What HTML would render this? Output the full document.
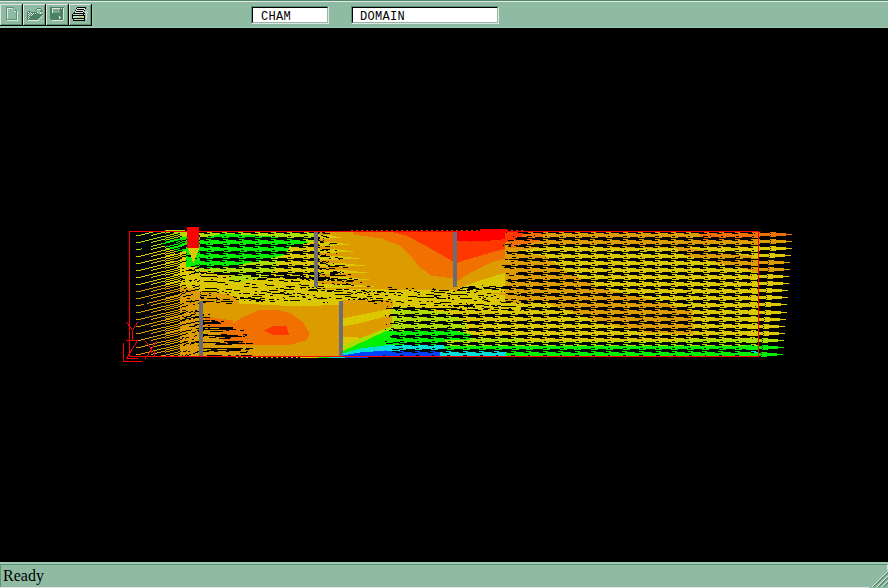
<!DOCTYPE html>
<html><head><meta charset="utf-8">
<style>
html,body{margin:0;padding:0;}
body{width:888px;height:588px;overflow:hidden;background:#000;position:relative;font-family:"Liberation Sans",sans-serif;}
.a{position:absolute;}
#tb{left:0;top:0;width:888px;height:28px;background:#8fbba3;}
.box{position:absolute;top:6px;height:18px;box-sizing:border-box;border-top:1px solid #5d9476;border-left:1px solid #5d9476;border-right:1px solid #e4e4e4;border-bottom:1px solid #e4e4e4;}
.box i{position:absolute;left:0;top:0;right:0;bottom:0;border-top:1px solid #000;border-left:1px solid #000;border-right:1px solid #8fbba3;border-bottom:1px solid #8fbba3;background:#fff;}
.box span{position:absolute;top:3px;font-family:"Liberation Mono",monospace;font-size:12px;line-height:14px;color:#000;letter-spacing:0.3px;}
#sb{left:0;top:562px;width:888px;height:26px;background:#8fbba3;}
svg{position:absolute;left:0;top:0;}
</style></head><body>
<div id="tb" class="a">
  <div class="a" style="left:0;top:0;width:888px;height:1px;background:#4f8b6a"></div>
  <div class="a" style="left:0;top:1px;width:888px;height:1px;background:#e6e6e6"></div>
  <div class="a" style="left:0;top:27px;width:888px;height:1px;background:#9ccab4"></div>
  <div class="a" style="left:0;top:26px;width:93px;height:1px;background:#9ccab4"></div>
  <div class="a" style="left:92px;top:3px;width:1px;height:24px;background:#9ccab4"></div>
  <div class="box" style="left:251px;width:78px"><i></i><span style="left:9px">CHAM</span></div>
  <div class="box" style="left:351px;width:148px"><i></i><span style="left:8px">DOMAIN</span></div>
</div>
<div id="sb" class="a">
  <div class="a" style="left:0;top:0;width:888px;height:2px;background:#9ccab4"></div>
  <div class="a" style="left:0;top:2px;width:887px;height:1px;background:#5d9476"></div>
  <div class="a" style="left:0;top:3px;width:1px;height:23px;background:#5d9476"></div>
  <div class="a" style="left:0;top:25px;width:869px;height:1px;background:#e4e4e4"></div>
  <div class="a" style="left:3px;top:4px;font-family:'Liberation Serif',serif;font-size:16px;line-height:20px;color:#000">Ready</div>
</div>
<svg width="888" height="588" viewBox="0 0 888 588" shape-rendering="crispEdges" style="position:absolute;left:0;top:0"><g transform="translate(0 0.5)" fill="none" stroke-width="1"><path stroke="#ff0000" d="M187 227h12M187 228h12M187 229h12M480 229h27M187 230h12M480 230h27M129 231h630M129 232h1M187 232h12M457 232h48M758 232h1M129 233h1M187 233h12M457 233h48M758 233h1M129 234h1M187 234h12M457 234h48M758 234h1M129 235h1M187 235h12M457 235h48M758 235h1M129 236h1M187 236h12M457 236h48M758 236h1M129 237h1M187 237h12M457 237h48M758 237h1M129 238h1M187 238h12M457 238h48M758 238h1M129 239h1M187 239h12M457 239h44M758 239h1M129 240h1M187 240h12M457 240h34M758 240h1M129 241h1M187 241h12M470 241h1M758 241h1M129 242h1M187 242h12M758 242h1M129 243h1M187 243h12M758 243h1M129 244h1M187 244h12M758 244h1M129 245h1M187 245h12M758 245h1M129 246h1M187 246h12M758 246h1M129 247h1M187 247h12M758 247h1M129 248h1M758 248h1M129 249h1M758 249h1M129 250h1M758 250h1M129 251h1M758 251h1M129 252h1M758 252h1M129 253h1M758 253h1M129 254h1M758 254h1M129 255h1M758 255h1M129 256h1M758 256h1M129 257h1M758 257h1M129 258h1M758 258h1M129 259h1M758 259h1M129 260h1M758 260h1M129 261h1M758 261h1M129 262h1M758 262h1M129 263h1M758 263h1M129 264h1M758 264h1M129 265h1M758 265h1M129 266h1M758 266h1M129 267h1M758 267h1M129 268h1M758 268h1M129 269h1M758 269h1M129 270h1M758 270h1M129 271h1M758 271h1M129 272h1M758 272h1M129 273h1M758 273h1M129 274h1M758 274h1M129 275h1M758 275h1M129 276h1M758 276h1M129 277h1M758 277h1M129 278h1M758 278h1M129 279h1M758 279h1M129 280h1M758 280h1M129 281h1M758 281h1M129 282h1M758 282h1M129 283h1M758 283h1M129 284h1M758 284h1M129 285h1M758 285h1M129 286h1M758 286h1M129 287h1M758 287h1M129 288h1M758 288h1M129 289h1M758 289h1M129 290h1M758 290h1M129 291h1M758 291h1M129 292h1M758 292h1M129 293h1M758 293h1M129 294h1M758 294h1M129 295h1M758 295h1M129 296h1M758 296h1M129 297h1M758 297h1M129 298h1M758 298h1M129 299h1M758 299h1M129 300h1M758 300h1M129 301h1M758 301h1M129 302h1M758 302h1M129 303h1M758 303h1M129 304h1M758 304h1M129 305h1M758 305h1M129 306h1M758 306h1M129 307h1M758 307h1M129 308h1M758 308h1M129 309h1M758 309h1M129 310h1M758 310h1M129 311h1M758 311h1M129 312h1M758 312h1M129 313h1M758 313h1M129 314h1M758 314h1M129 315h1M758 315h1M129 316h1M758 316h1M129 317h1M758 317h1M129 318h1M758 318h1M129 319h1M758 319h1M129 320h1M758 320h1M129 321h1M758 321h1M126 322h1M129 322h1M137 322h1M758 322h1M127 323h1M129 323h1M136 323h1M758 323h1M128 324h2M136 324h1M758 324h1M128 325h2M135 325h1M758 325h1M129 326h1M134 326h1M758 326h1M129 327h2M134 327h1M758 327h1M129 328h1M131 328h1M133 328h1M758 328h1M129 329h1M131 329h1M133 329h1M758 329h1M129 330h1M132 330h1M758 330h1M129 331h1M132 331h1M758 331h1M129 332h1M132 332h1M758 332h1M129 333h1M132 333h1M758 333h1M129 334h1M132 334h1M758 334h1M129 335h1M132 335h1M758 335h1M129 336h1M132 336h1M758 336h1M129 337h1M132 337h1M758 337h1M129 338h1M132 338h1M758 338h1M129 339h1M132 339h1M758 339h1M126 340h12M758 340h1M129 341h1M136 341h1M145 341h1M156 341h1M758 341h1M129 342h1M136 342h1M146 342h1M155 342h1M758 342h1M123 343h1M129 343h1M135 343h1M147 343h1M155 343h1M758 343h1M123 344h1M129 344h1M135 344h1M147 344h1M154 344h1M758 344h1M123 345h1M129 345h1M134 345h1M148 345h1M153 345h1M758 345h1M123 346h1M129 346h1M133 346h1M149 346h1M153 346h1M758 346h1M123 347h1M129 347h1M133 347h1M150 347h1M152 347h1M758 347h1M123 348h1M129 348h1M132 348h1M150 348h2M758 348h1M123 349h1M129 349h1M131 349h1M151 349h1M758 349h1M123 350h1M129 350h1M131 350h1M150 350h2M758 350h1M123 351h1M129 351h2M150 351h2M154 351h1M758 351h1M123 352h1M129 352h2M149 352h1M151 352h1M154 352h1M758 352h1M123 353h1M129 353h1M148 353h1M154 353h1M758 353h1M123 354h1M128 354h2M148 354h1M154 354h1M758 354h1M123 355h1M128 355h2M147 355h1M154 355h1M758 355h1M123 356h1M127 356h1M129 356h630M123 357h1M127 357h1M145 357h1M123 358h1M126 358h12M145 358h1M123 359h1M123 360h1M123 361h19"/><path stroke="#ff3800" d="M351 230h2M356 230h2M361 230h2M366 230h2M371 230h2M376 230h2M381 230h2M386 230h2M391 230h2M396 230h2M401 230h2M406 230h2M411 230h2M416 230h2M421 230h2M426 230h2M431 230h2M436 230h2M441 230h2M446 230h2M451 230h2M456 230h2M461 230h2M466 230h2M471 230h2M476 230h2M507 230h1M511 230h2M516 230h2M521 230h2M394 232h59M505 232h1M507 232h11M398 233h55M505 233h18M402 234h51M505 234h18M406 235h47M505 235h17M408 236h45M505 236h8M514 236h8M410 237h43M505 237h12M412 238h41M505 238h10M414 239h39M501 239h15M416 240h37M491 240h17M417 241h36M457 241h13M471 241h39M419 242h34M457 242h49M421 243h32M457 243h48M423 244h30M457 244h48M425 245h28M457 245h46M504 245h1M427 246h26M457 246h48M429 247h24M457 247h48M430 248h23M457 248h48M432 249h21M457 249h46M434 250h19M457 250h42M436 251h17M457 251h38M437 252h16M457 252h34M439 253h14M457 253h31M441 254h12M457 254h27M443 255h10M457 255h24M444 256h9M457 256h21M446 257h7M457 257h17M448 258h5M457 258h14M450 259h3M457 259h11M451 260h2M457 260h7M457 261h4M457 262h1M285 325h1M272 326h14M270 327h17M268 328h19M266 329h21M264 330h24M266 331h22M268 332h20M270 333h19M272 334h17"/><path stroke="#f07000" d="M353 232h41M528 232h5M543 232h1M704 232h5M719 232h5M735 232h5M752 232h6M759 232h1M770 232h6M354 233h44M531 233h10M707 233h10M722 233h10M738 233h10M753 233h1M755 233h3M759 233h11M771 233h15M354 234h48M523 234h20M700 234h58M759 234h33M361 235h45M522 235h12M535 235h8M700 235h10M711 235h47M759 235h11M771 235h15M368 236h40M522 236h5M532 236h10M700 236h3M708 236h13M723 236h13M739 236h13M754 236h4M759 236h1M770 236h6M374 237h36M528 237h7M704 237h7M719 237h7M735 237h7M752 237h6M381 238h31M384 239h30M527 239h5M703 239h5M719 239h5M735 239h5M386 240h30M514 240h10M530 240h10M700 240h1M389 241h28M510 241h27M392 242h27M509 242h24M395 243h26M509 243h2M512 243h16M397 244h26M511 244h10M400 245h25M511 245h3M518 245h1M401 246h26M511 246h5M402 247h27M510 247h5M403 248h27M510 248h1M404 249h28M503 249h2M405 250h29M499 250h6M406 251h30M495 251h10M407 252h30M491 252h14M408 253h31M488 253h17M409 254h32M484 254h21M410 255h33M481 255h24M411 256h33M478 256h27M412 257h34M474 257h31M413 258h35M471 258h34M414 259h36M468 259h34M414 260h37M464 260h34M415 261h38M461 261h34M416 262h37M458 262h33M417 263h36M457 263h32M418 264h35M457 264h30M418 265h35M457 265h28M419 266h34M457 266h26M420 267h33M457 267h24M421 268h32M457 268h22M423 269h30M457 269h20M424 270h29M457 270h18M426 271h27M457 271h16M427 272h26M457 272h14M428 273h25M457 273h12M430 274h23M457 274h11M431 275h22M457 275h9M438 276h15M457 276h7M446 277h7M457 277h6M457 278h4M457 279h3M457 280h1M275 309h1M258 310h22M256 311h27M254 312h33M251 313h40M249 314h43M247 315h47M205 316h1M245 316h50M210 317h3M242 317h54M205 318h14M240 318h58M205 319h21M239 319h60M210 320h1M215 320h18M237 320h63M205 321h7M218 321h3M224 321h9M236 321h66M220 322h13M234 322h69M221 323h83M205 324h99M205 325h3M210 325h75M286 325h19M205 326h67M286 326h20M233 327h37M287 327h19M233 328h35M287 328h20M236 329h30M287 329h20M223 330h3M229 330h11M244 330h20M288 330h20M223 331h43M288 331h21M222 332h46M288 332h21M221 333h49M289 333h21M220 334h1M227 334h16M247 334h25M289 334h20M238 335h7M247 335h62M242 336h1M245 336h63M221 337h4M231 337h77M230 338h77M222 339h85M223 340h83M243 341h59M224 342h3M239 342h2M242 342h56M226 343h2M245 343h1M253 343h42M238 344h53M250 345h1"/><path stroke="#dc9c00" d="M320 232h2M325 232h28M544 232h4M559 232h5M575 232h5M591 232h5M606 232h5M623 232h5M638 232h5M655 232h5M671 232h5M686 232h5M319 233h4M330 233h24M546 233h10M562 233h10M578 233h10M594 233h10M609 233h10M626 233h10M641 233h10M658 233h10M674 233h10M689 233h10M319 234h35M543 234h157M332 235h29M543 235h157M336 236h32M542 236h3M547 236h13M563 236h13M579 236h13M595 236h13M610 236h13M627 236h13M642 236h13M659 236h13M675 236h13M690 236h10M341 237h33M543 237h7M559 237h7M575 237h7M591 237h7M606 237h7M623 237h7M638 237h7M655 237h7M671 237h7M686 237h7M330 238h51M319 239h65M543 239h5M559 239h5M575 239h5M590 239h5M607 239h5M623 239h5M639 239h5M655 239h5M671 239h5M688 239h5M751 239h7M759 239h1M770 239h6M320 240h3M324 240h62M546 240h10M562 240h10M578 240h10M593 240h10M610 240h10M626 240h10M642 240h10M658 240h10M674 240h10M691 240h9M706 240h10M722 240h10M738 240h10M753 240h5M759 240h11M771 240h15M319 241h1M323 241h66M537 241h221M759 241h33M337 242h55M506 242h3M533 242h225M759 242h11M771 242h15M343 243h52M505 243h4M531 243h13M547 243h13M563 243h13M579 243h13M594 243h13M611 243h13M627 243h13M643 243h13M659 243h13M675 243h13M692 243h13M707 243h13M723 243h13M739 243h13M754 243h4M759 243h1M770 243h6M349 244h48M527 244h7M543 244h7M559 244h7M575 244h7M590 244h7M607 244h7M623 244h7M639 244h7M655 244h7M671 244h7M688 244h7M703 244h7M719 244h7M735 244h7M751 244h7M334 245h66M505 245h4M318 246h7M330 246h71M505 246h3M526 246h5M543 246h4M607 246h5M622 246h5M640 246h5M655 246h5M671 246h5M687 246h5M704 246h5M718 246h5M735 246h5M751 246h3M320 247h82M505 247h5M515 247h9M529 247h10M613 247h7M625 247h10M643 247h10M658 247h8M675 247h8M319 248h84M505 248h5M511 248h22M630 248h1M676 248h15M339 249h65M505 249h22M678 249h20M346 250h59M505 250h15M679 250h9M691 250h13M353 251h53M505 251h1M508 251h10M687 251h7M704 251h7M336 252h71M505 252h2M319 253h17M337 253h71M505 253h2M512 253h5M687 253h5M703 253h5M718 253h5M320 254h5M326 254h83M505 254h7M515 254h10M531 254h2M690 254h10M706 254h10M721 254h10M319 255h2M326 255h84M505 255h34M685 255h60M343 256h68M505 256h41M689 256h50M740 256h12M351 257h61M505 257h7M516 257h13M532 257h13M546 257h1M694 257h10M707 257h13M722 257h13M740 257h13M359 258h54M505 258h14M528 258h7M542 258h6M703 258h7M718 258h7M736 258h7M751 258h7M340 259h74M502 259h3M508 259h1M319 260h95M498 260h20M527 260h5M543 260h5M707 260h1M718 260h5M735 260h5M751 260h7M768 260h6M320 261h2M326 261h2M329 261h86M495 261h16M514 261h10M530 261h10M546 261h6M711 261h5M721 261h10M738 261h10M751 261h1M753 261h5M759 261h9M769 261h15M319 262h1M323 262h3M328 262h88M491 262h62M716 262h42M759 262h31M346 263h71M489 263h66M720 263h38M759 263h9M769 263h15M355 264h63M487 264h25M515 264h13M531 264h13M547 264h9M725 264h10M739 264h19M768 264h6M365 265h53M485 265h17M511 265h7M527 265h7M543 265h7M735 265h7M751 265h7M342 266h77M483 266h22M319 267h24M348 267h72M481 267h23M511 267h5M527 267h5M543 267h5M738 267h2M751 267h7M768 267h6M326 268h3M335 268h86M479 268h31M514 268h10M530 268h10M546 268h10M742 268h6M751 268h1M753 268h5M759 268h9M769 268h15M319 269h1M322 269h4M329 269h94M477 269h86M747 269h11M759 269h31M347 270h77M475 270h90M751 270h7M759 270h9M769 270h15M357 271h69M473 271h55M531 271h13M547 271h13M564 271h3M752 271h6M768 271h6M367 272h60M471 272h47M527 272h7M543 272h7M560 272h7M343 273h85M469 273h34M505 273h1M509 273h7M319 274h3M325 274h5M335 274h13M351 274h79M468 274h32M505 274h11M528 274h5M543 274h5M559 274h5M320 275h10M346 275h85M466 275h30M505 275h4M514 275h10M531 275h10M546 275h10M562 275h10M319 276h6M326 276h112M464 276h29M505 276h72M349 277h97M463 277h27M505 277h74M359 278h94M461 278h26M505 278h23M532 278h13M547 278h13M563 278h13M578 278h3M369 279h84M460 279h23M505 279h3M511 279h7M528 279h7M543 279h7M559 279h7M574 279h7M344 280h3M354 280h99M458 280h22M505 280h1M318 281h24M344 281h2M353 281h100M457 281h20M505 281h3M512 281h5M526 281h5M543 281h5M560 281h5M574 281h5M318 282h42M362 282h91M457 282h18M505 282h6M515 282h10M529 282h10M546 282h10M563 282h10M577 282h10M319 283h3M324 283h8M334 283h12M348 283h105M457 283h15M505 283h86M352 284h101M457 284h12M505 284h88M161 285h5M170 285h4M363 285h90M457 285h9M505 285h8M516 285h13M530 285h13M547 285h13M564 285h13M578 285h13M157 286h4M166 286h4M174 286h4M180 286h1M374 286h79M457 286h7M512 286h7M526 286h7M543 286h7M560 286h7M574 286h7M591 286h6M153 287h4M165 287h1M170 287h4M180 287h6M346 287h42M392 287h69M149 288h4M161 288h4M166 288h4M178 288h6M186 288h5M321 288h2M325 288h81M408 288h4M414 288h19M434 288h24M511 288h5M527 288h5M544 288h5M560 288h5M576 288h5M591 288h5M145 289h4M157 289h4M165 289h1M174 289h4M180 289h15M386 289h3M397 289h35M436 289h22M505 289h4M514 289h10M530 289h10M547 289h10M563 289h10M579 289h10M594 289h10M141 290h4M153 290h4M170 290h4M178 290h8M188 290h3M195 290h4M454 290h3M505 290h105M136 291h5M151 291h2M166 291h4M174 291h4M180 291h2M184 291h2M191 291h11M505 291h109M161 292h5M170 292h4M182 292h3M186 292h14M201 292h13M505 292h12M519 292h9M531 292h13M548 292h13M564 292h13M580 292h13M595 292h13M610 292h9M157 293h4M166 293h4M180 293h2M185 293h24M211 293h10M491 293h15M514 293h7M527 293h7M544 293h7M560 293h7M576 293h7M591 293h7M606 293h7M153 294h4M165 294h1M178 294h3M182 294h9M193 294h7M201 294h26M499 294h9M517 294h1M149 295h4M161 295h4M174 295h6M181 295h5M191 295h10M207 295h2M211 295h19M505 295h12M520 295h1M527 295h5M542 295h5M559 295h5M575 295h5M590 295h5M607 295h5M623 295h5M145 296h4M157 296h4M170 296h8M180 296h3M186 296h14M201 296h32M234 296h2M505 296h20M530 296h10M545 296h10M562 296h10M578 296h10M593 296h10M610 296h10M626 296h10M141 297h4M153 297h4M166 297h8M178 297h22M204 297h12M217 297h17M505 297h136M136 298h5M151 298h2M165 298h5M174 298h4M180 298h7M190 298h11M204 298h3M218 298h19M505 298h141M161 299h5M170 299h4M178 299h39M220 299h3M230 299h6M508 299h3M516 299h13M531 299h13M546 299h13M563 299h13M579 299h13M594 299h13M611 299h13M627 299h13M643 299h7M157 300h4M166 300h4M174 300h4M180 300h11M192 300h3M199 300h17M217 300h21M342 300h30M383 300h10M505 300h14M527 300h7M542 300h7M559 300h7M575 300h7M590 300h7M607 300h7M623 300h7M639 300h7M153 301h4M165 301h1M170 301h4M180 301h6M195 301h4M214 301h7M233 301h6M343 301h25M375 301h6M383 301h3M389 301h4M505 301h1M513 301h8M149 302h4M161 302h4M166 302h4M178 302h12M191 302h8M206 302h10M220 302h19M343 302h48M392 302h1M511 302h5M517 302h4M528 302h5M543 302h5M558 302h5M574 302h5M591 302h5M608 302h5M623 302h5M639 302h5M655 302h5M147 303h2M157 303h4M165 303h1M174 303h4M180 303h2M184 303h14M203 303h23M232 303h8M343 303h31M377 303h16M548 303h8M561 303h10M577 303h10M594 303h10M611 303h10M626 303h10M642 303h10M658 303h8M141 304h3M153 304h4M170 304h4M178 304h2M182 304h11M195 304h4M203 304h57M343 304h50M551 304h118M136 305h5M151 305h2M166 305h4M174 305h4M180 305h6M188 305h11M203 305h77M321 305h18M343 305h50M553 305h120M161 306h5M170 306h4M178 306h4M186 306h13M203 306h97M301 306h38M343 306h44M388 306h4M556 306h4M562 306h13M578 306h13M595 306h13M612 306h13M627 306h13M643 306h13M659 306h13M674 306h3M157 307h4M166 307h4M174 307h4M180 307h1M182 307h17M203 307h136M343 307h49M559 307h6M574 307h7M591 307h7M608 307h7M623 307h7M639 307h7M655 307h7M670 307h7M153 308h4M165 308h1M170 308h4M180 308h19M203 308h136M343 308h43M149 309h4M161 309h4M166 309h4M178 309h21M203 309h72M276 309h63M343 309h44M564 309h1M576 309h5M591 309h5M607 309h5M624 309h5M639 309h5M655 309h5M672 309h5M687 309h2M145 310h4M157 310h4M165 310h1M174 310h4M180 310h2M186 310h9M197 310h2M203 310h55M280 310h59M343 310h39M567 310h6M579 310h10M594 310h10M610 310h10M627 310h10M642 310h10M658 310h10M675 310h10M690 310h3M141 311h4M153 311h4M170 311h4M178 311h8M188 311h3M193 311h2M203 311h53M283 311h56M343 311h34M570 311h123M136 312h5M151 312h2M166 312h4M174 312h4M180 312h2M186 312h3M191 312h3M195 312h4M203 312h51M287 312h52M343 312h29M573 312h120M161 313h5M170 313h4M178 313h2M184 313h11M196 313h3M203 313h48M291 313h48M343 313h24M575 313h2M580 313h13M595 313h13M611 313h13M628 313h13M643 313h13M659 313h13M676 313h13M691 313h2M157 314h4M166 314h4M174 314h4M182 314h9M195 314h4M204 314h4M210 314h39M292 314h47M343 314h19M578 314h5M591 314h7M607 314h7M624 314h7M639 314h7M655 314h7M672 314h7M687 314h6M153 315h4M165 315h1M170 315h4M178 315h12M192 315h7M204 315h43M294 315h45M343 315h14M149 316h4M161 316h4M166 316h4M174 316h8M184 316h2M191 316h4M203 316h2M206 316h39M295 316h44M343 316h9M385 316h4M390 316h2M590 316h5M607 316h5M622 316h5M640 316h5M654 316h5M671 316h5M688 316h5M145 317h4M157 317h4M165 317h1M170 317h8M180 317h4M187 317h4M213 317h29M296 317h43M343 317h4M382 317h10M586 317h2M593 317h10M610 317h10M625 317h10M643 317h10M657 317h10M674 317h10M691 317h2M141 318h4M153 318h4M166 318h8M178 318h7M191 318h2M195 318h4M203 318h2M219 318h21M298 318h41M378 318h14M589 318h104M136 319h5M151 319h2M165 319h5M174 319h4M180 319h2M186 319h3M191 319h8M203 319h2M226 319h13M299 319h40M374 319h18M592 319h50M643 319h50M161 320h5M170 320h4M178 320h2M185 320h14M233 320h4M300 320h39M370 320h22M595 320h12M611 320h13M626 320h13M644 320h13M658 320h13M675 320h13M692 320h1M157 321h4M166 321h4M174 321h4M180 321h1M182 321h13M204 321h1M233 321h3M302 321h37M367 321h25M607 321h7M622 321h7M640 321h7M654 321h7M671 321h7M688 321h5M153 322h4M165 322h1M170 322h4M180 322h11M195 322h4M233 322h1M303 322h36M363 322h29M149 323h4M161 323h4M166 323h4M178 323h8M191 323h8M304 323h35M358 323h32M607 323h5M624 323h5M639 323h5M655 323h5M671 323h5M688 323h5M145 324h4M157 324h4M165 324h1M174 324h4M180 324h2M186 324h9M304 324h35M353 324h33M387 324h5M610 324h10M627 324h10M642 324h10M658 324h10M674 324h10M691 324h2M141 325h4M153 325h4M170 325h4M178 325h2M182 325h12M197 325h2M203 325h2M305 325h34M348 325h44M614 325h79M136 326h5M151 326h2M166 326h4M174 326h4M180 326h9M195 326h4M203 326h2M306 326h33M343 326h49M618 326h75M161 327h5M170 327h4M178 327h21M306 327h33M343 327h46M623 327h1M628 327h13M643 327h13M659 327h13M675 327h13M692 327h1M157 328h4M166 328h4M174 328h4M180 328h16M205 328h3M210 328h9M307 328h32M343 328h42M627 328h4M639 328h7M655 328h7M671 328h7M688 328h5M153 329h4M165 329h1M170 329h4M178 329h13M192 329h7M307 329h32M343 329h39M149 330h4M161 330h4M166 330h4M174 330h12M191 330h6M204 330h19M308 330h31M343 330h37M639 330h5M655 330h5M671 330h5M686 330h5M145 331h4M157 331h4M165 331h1M170 331h8M180 331h2M186 331h9M196 331h2M203 331h7M309 331h30M343 331h34M642 331h10M658 331h10M674 331h10M689 331h4M141 332h4M153 332h4M166 332h8M178 332h2M182 332h10M195 332h4M203 332h19M309 332h30M343 332h32M645 332h48M136 333h5M151 333h2M165 333h5M174 333h4M180 333h6M188 333h11M203 333h18M310 333h29M343 333h29M669 333h24M161 334h5M170 334h4M178 334h4M186 334h13M208 334h12M309 334h30M343 334h27M692 334h1M157 335h4M166 335h4M174 335h4M182 335h13M197 335h2M309 335h30M343 335h24M153 336h4M165 336h1M170 336h4M180 336h14M195 336h4M204 336h11M308 336h31M343 336h22M149 337h4M161 337h4M166 337h4M178 337h4M184 337h2M189 337h10M203 337h6M216 337h5M308 337h31M358 337h4M145 338h4M157 338h4M165 338h1M174 338h4M180 338h2M183 338h2M186 338h13M203 338h16M307 338h32M141 339h4M153 339h4M170 339h4M178 339h2M182 339h10M194 339h5M203 339h19M307 339h32M138 340h3M151 340h2M166 340h4M174 340h4M180 340h19M203 340h20M306 340h33M161 341h5M170 341h4M178 341h6M188 341h7M203 341h21M302 341h37M157 342h4M166 342h4M174 342h4M180 342h2M186 342h5M195 342h1M220 342h4M298 342h41M153 343h2M156 343h1M165 343h1M170 343h4M182 343h4M189 343h2M194 343h5M203 343h13M295 343h44M149 344h4M161 344h4M166 344h4M178 344h6M186 344h4M191 344h8M203 344h12M232 344h6M291 344h48M145 345h3M157 345h4M165 345h1M174 345h4M180 345h3M185 345h13M203 345h47M251 345h88M141 346h4M154 346h3M170 346h4M178 346h21M203 346h136M136 347h5M151 347h1M166 347h4M174 347h4M180 347h19M203 347h136M161 348h5M170 348h4M178 348h21M243 348h3M253 348h86M157 349h4M166 349h4M174 349h4M180 349h19M203 349h8M217 349h10M241 349h4M249 349h90M153 350h4M165 350h1M170 350h4M180 350h6M187 350h12M203 350h4M241 350h98M149 351h1M152 351h1M161 351h4M166 351h4M178 351h2M181 351h2M186 351h2M190 351h7M209 351h5M218 351h8M229 351h17M248 351h91M145 352h4M157 352h4M165 352h1M174 352h4M180 352h15M198 352h1M203 352h37M247 352h92M141 353h4M153 353h1M155 353h2M170 353h4M178 353h15M195 353h4M203 353h136M136 354h5M151 354h2M166 354h4M174 354h4M180 354h6M187 354h2M191 354h8M203 354h136M161 355h5M170 355h4M178 355h4M183 355h2M186 355h1M189 355h10M203 355h4M222 355h6M231 355h5M239 355h2M252 355h87"/><path stroke="#dcc800" d="M318 234h1M318 235h3M323 235h9M318 236h5M327 236h9M320 237h6M329 237h12M320 238h3M324 238h6M313 241h1M318 241h1M309 242h5M318 242h2M324 242h13M307 243h7M318 243h12M337 243h6M303 244h7M319 244h10M330 244h19M320 245h14M290 246h1M303 246h5M547 246h1M560 246h5M575 246h5M590 246h5M754 246h4M759 246h1M770 246h6M289 247h10M306 247h8M546 247h10M563 247h10M578 247h10M593 247h10M610 247h3M666 247h2M674 247h1M683 247h1M690 247h10M707 247h10M721 247h10M738 247h10M753 247h5M759 247h11M771 247h15M188 248h11M289 248h25M318 248h1M533 248h97M631 248h45M691 248h67M759 248h33M188 249h11M288 249h26M318 249h4M330 249h9M527 249h119M647 249h31M698 249h60M759 249h11M771 249h15M161 250h5M170 250h4M189 250h9M287 250h1M290 250h13M307 250h7M318 250h2M324 250h2M328 250h7M337 250h9M520 250h8M530 250h13M547 250h13M564 250h13M579 250h13M594 250h13M611 250h13M626 250h13M644 250h13M659 250h13M675 250h4M708 250h13M722 250h13M739 250h13M754 250h4M759 250h1M770 250h6M157 251h4M166 251h4M174 251h2M183 251h3M189 251h9M287 251h6M303 251h7M318 251h35M526 251h7M543 251h7M560 251h7M575 251h7M590 251h7M607 251h7M622 251h7M640 251h7M655 251h7M671 251h7M718 251h7M735 251h7M751 251h7M153 252h4M165 252h1M170 252h4M180 252h6M189 252h9M320 252h7M330 252h6M149 253h4M161 253h4M166 253h4M174 253h1M178 253h8M190 253h7M287 253h5M303 253h5M528 253h5M542 253h5M558 253h5M575 253h5M591 253h5M607 253h5M623 253h5M638 253h5M655 253h5M671 253h5M736 253h5M751 253h7M769 253h6M145 254h4M157 254h4M165 254h1M170 254h8M180 254h2M190 254h7M290 254h10M306 254h8M533 254h8M545 254h10M561 254h10M578 254h10M594 254h10M610 254h10M626 254h10M641 254h10M658 254h10M674 254h10M739 254h10M752 254h1M754 254h4M759 254h10M770 254h15M141 255h4M153 255h4M166 255h8M178 255h3M182 255h4M191 255h5M284 255h30M318 255h1M539 255h146M745 255h13M759 255h32M136 256h5M151 256h2M165 256h5M174 256h4M180 256h2M191 256h5M283 256h31M318 256h2M330 256h13M546 256h143M752 256h6M759 256h10M770 256h15M161 257h5M170 257h4M178 257h2M182 257h4M191 257h5M282 257h6M291 257h13M307 257h7M318 257h17M338 257h13M547 257h12M562 257h13M579 257h13M595 257h13M611 257h13M627 257h13M642 257h13M659 257h13M675 257h13M691 257h3M753 257h5M769 257h6M157 258h4M166 258h4M174 258h4M182 258h4M192 258h3M287 258h7M303 258h7M319 258h10M331 258h7M343 258h16M548 258h1M558 258h7M575 258h7M591 258h7M607 258h7M623 258h7M638 258h7M655 258h7M671 258h7M687 258h7M153 259h4M165 259h1M170 259h4M180 259h6M192 259h3M320 259h19M149 260h4M161 260h4M166 260h4M178 260h8M192 260h3M288 260h5M303 260h5M559 260h5M575 260h5M591 260h5M608 260h5M623 260h5M640 260h5M655 260h5M671 260h5M687 260h5M703 260h4M145 261h4M157 261h4M165 261h1M170 261h8M180 261h2M193 261h1M280 261h5M291 261h10M306 261h8M552 261h4M562 261h10M578 261h10M594 261h10M611 261h10M626 261h10M643 261h10M658 261h10M674 261h10M690 261h10M706 261h5M141 262h4M153 262h4M166 262h8M178 262h2M182 262h4M193 262h1M279 262h35M318 262h1M553 262h163M136 263h5M151 263h2M165 263h5M174 263h4M180 263h6M278 263h36M318 263h2M326 263h7M334 263h12M555 263h165M161 264h5M170 264h4M178 264h8M278 264h11M292 264h13M307 264h7M318 264h8M328 264h27M556 264h4M563 264h13M579 264h13M595 264h13M612 264h13M627 264h13M644 264h13M659 264h13M675 264h13M691 264h13M707 264h13M722 264h3M157 265h4M166 265h4M174 265h4M180 265h6M277 265h2M288 265h7M303 265h7M319 265h9M330 265h5M345 265h20M559 265h7M575 265h7M591 265h7M608 265h7M623 265h7M640 265h7M655 265h7M671 265h7M687 265h7M703 265h7M718 265h7M153 266h4M165 266h1M170 266h4M178 266h8M320 266h8M339 266h3M149 267h4M161 267h4M166 267h4M177 267h20M288 267h5M303 267h5M560 267h5M575 267h5M590 267h5M608 267h5M623 267h5M639 267h5M655 267h5M671 267h5M687 267h5M703 267h5M720 267h5M735 267h3M145 268h4M157 268h4M165 268h1M174 268h4M180 268h2M184 268h11M275 268h9M291 268h10M306 268h8M563 268h10M578 268h10M593 268h10M611 268h10M626 268h10M642 268h10M658 268h10M674 268h10M690 268h10M706 268h10M723 268h10M738 268h4M141 269h4M153 269h4M170 269h4M178 269h11M192 269h2M195 269h3M274 269h40M318 269h1M563 269h184M136 270h5M151 270h2M166 270h4M174 270h4M180 270h6M195 270h3M199 270h1M273 270h41M318 270h29M565 270h46M612 270h139M161 271h5M170 271h4M178 271h4M184 271h11M196 271h2M200 271h8M275 271h13M292 271h13M307 271h7M318 271h15M337 271h3M341 271h16M567 271h10M579 271h13M594 271h13M612 271h13M627 271h13M643 271h13M659 271h13M675 271h13M691 271h13M707 271h13M724 271h13M739 271h13M157 272h4M166 272h4M174 272h4M180 272h14M199 272h1M207 272h7M272 272h6M288 272h7M303 272h7M319 272h2M324 272h6M340 272h2M344 272h23M575 272h7M590 272h7M608 272h7M623 272h7M639 272h7M655 272h7M671 272h7M687 272h7M703 272h7M720 272h7M735 272h7M751 272h7M153 273h4M165 273h1M170 273h4M178 273h13M195 273h3M199 273h2M204 273h2M321 273h9M338 273h2M341 273h2M503 273h2M149 274h4M161 274h4M166 274h4M174 274h15M191 274h7M199 274h18M271 274h5M287 274h5M303 274h5M500 274h5M574 274h5M591 274h5M608 274h5M624 274h5M639 274h5M655 274h5M672 274h5M688 274h5M704 274h5M719 274h5M735 274h5M750 274h7M767 274h6M145 275h4M157 275h4M165 275h1M173 275h5M180 275h2M186 275h12M199 275h1M201 275h30M274 275h10M290 275h10M306 275h8M496 275h9M577 275h10M594 275h10M611 275h10M627 275h10M642 275h10M658 275h10M675 275h10M691 275h10M707 275h10M722 275h10M738 275h10M750 275h1M752 275h6M759 275h8M768 275h15M141 276h4M153 276h4M170 276h4M178 276h2M182 276h16M199 276h2M217 276h12M275 276h1M301 276h1M304 276h5M311 276h3M493 276h12M577 276h181M759 276h30M136 277h5M151 277h2M166 277h4M174 277h4M180 277h37M218 277h5M226 277h4M262 277h5M280 277h3M306 277h3M330 277h19M490 277h15M579 277h179M759 277h8M768 277h15M161 278h5M170 278h4M178 278h2M183 278h47M267 278h18M297 278h3M330 278h1M338 278h11M352 278h7M487 278h18M581 278h10M595 278h13M612 278h13M628 278h13M643 278h13M659 278h13M676 278h13M692 278h13M708 278h13M723 278h13M739 278h19M767 278h6M157 279h4M166 279h4M174 279h4M180 279h1M185 279h10M197 279h14M213 279h16M255 279h2M266 279h36M304 279h2M309 279h3M326 279h2M334 279h3M347 279h7M358 279h11M483 279h22M591 279h7M608 279h7M624 279h7M639 279h7M655 279h7M672 279h7M688 279h7M704 279h7M719 279h7M735 279h7M750 279h7M153 280h4M165 280h1M170 280h4M178 280h2M182 280h7M192 280h2M195 280h4M200 280h29M250 280h18M273 280h6M284 280h7M293 280h15M310 280h4M324 280h3M329 280h2M335 280h2M342 280h2M480 280h25M149 281h4M161 281h4M166 281h4M174 281h9M185 281h5M191 281h6M199 281h5M217 281h12M245 281h39M288 281h3M300 281h14M477 281h28M591 281h5M607 281h5M623 281h5M639 281h5M654 281h5M671 281h5M687 281h5M703 281h5M720 281h5M734 281h5M751 281h6M767 281h6M145 282h4M157 282h4M165 282h1M170 282h8M181 282h36M225 282h15M241 282h73M475 282h30M594 282h10M610 282h10M626 282h10M642 282h10M657 282h10M674 282h10M690 282h10M706 282h10M723 282h10M737 282h10M750 282h1M752 282h6M759 282h8M768 282h15M141 283h4M153 283h4M166 283h8M178 283h68M250 283h64M318 283h1M472 283h33M591 283h167M759 283h30M136 284h5M151 284h2M165 284h5M174 284h4M180 284h45M228 284h24M256 284h9M267 284h32M301 284h13M318 284h16M335 284h2M340 284h2M351 284h1M469 284h36M593 284h165M759 284h8M768 284h15M178 285h4M186 285h6M195 285h4M200 285h67M274 285h27M309 285h5M318 285h33M354 285h9M466 285h16M483 285h22M595 285h13M611 285h13M627 285h13M643 285h13M658 285h13M675 285h13M691 285h13M707 285h13M724 285h13M738 285h20M767 285h6M182 286h13M199 286h45M249 286h37M295 286h19M324 286h43M370 286h4M464 286h5M475 286h14M496 286h7M597 286h1M607 286h7M623 286h7M639 286h7M654 286h7M671 286h7M687 286h7M703 286h7M720 286h7M734 286h7M752 286h6M187 287h6M195 287h57M258 287h31M291 287h9M306 287h2M310 287h2M314 287h2M317 287h29M461 287h1M476 287h7M490 287h5M191 288h8M200 288h5M217 288h59M278 288h2M284 288h17M302 288h15M458 288h2M463 288h5M479 288h5M496 288h5M606 288h5M623 288h5M638 288h5M655 288h5M670 288h5M688 288h5M703 288h5M719 288h5M735 288h5M750 288h7M766 288h6M199 289h18M219 289h7M232 289h52M294 289h15M317 289h19M342 289h2M349 289h37M460 289h7M473 289h3M482 289h10M499 289h6M609 289h10M626 289h10M641 289h10M658 289h10M673 289h10M691 289h10M706 289h10M722 289h10M738 289h10M749 289h1M751 289h7M759 289h7M767 289h15M199 290h35M240 290h29M278 290h30M318 290h3M325 290h2M334 290h19M356 290h5M365 290h44M411 290h23M435 290h4M449 290h5M466 290h1M470 290h35M610 290h148M759 290h29M217 291h5M224 291h31M257 291h4M267 291h17M286 291h31M318 291h9M332 291h2M343 291h20M367 291h2M371 291h2M375 291h2M384 291h30M417 291h14M434 291h19M455 291h21M478 291h23M502 291h2M614 291h77M692 291h66M759 291h7M767 291h15M214 292h3M219 292h6M227 292h2M231 292h36M271 292h9M284 292h63M351 292h6M362 292h5M369 292h8M381 292h3M386 292h3M395 292h2M401 292h16M420 292h14M445 292h22M470 292h4M476 292h29M619 292h4M627 292h13M642 292h13M659 292h13M674 292h13M692 292h13M707 292h13M723 292h13M739 292h19M766 292h6M221 293h18M241 293h2M250 293h22M285 293h2M289 293h4M295 293h2M301 293h50M353 293h2M357 293h7M366 293h35M403 293h44M451 293h36M623 293h7M638 293h7M655 293h7M670 293h7M688 293h7M703 293h7M719 293h7M735 293h7M752 293h6M229 294h25M257 294h2M265 294h19M292 294h9M305 294h2M309 294h26M351 294h17M370 294h4M379 294h15M396 294h22M420 294h6M434 294h17M467 294h32M230 295h40M273 295h40M315 295h70M388 295h10M401 295h33M441 295h7M450 295h17M468 295h10M484 295h10M496 295h9M639 295h5M656 295h5M670 295h5M686 295h5M703 295h5M719 295h5M735 295h5M750 295h6M766 295h6M236 296h16M262 296h27M295 296h2M299 296h3M305 296h40M351 296h16M372 296h36M417 296h17M437 296h21M460 296h26M488 296h3M493 296h12M642 296h10M659 296h10M673 296h10M689 296h10M706 296h10M722 296h10M738 296h10M749 296h1M751 296h7M759 296h7M767 296h15M237 297h3M244 297h4M251 297h32M284 297h19M306 297h8M317 297h4M323 297h6M331 297h20M357 297h60M434 297h2M439 297h9M450 297h29M481 297h2M484 297h21M641 297h117M759 297h29M237 298h3M255 298h5M265 298h19M285 298h32M327 298h9M342 298h17M361 298h2M367 298h3M373 298h3M383 298h54M446 298h2M450 298h10M472 298h12M486 298h11M499 298h6M646 298h112M759 298h7M767 298h15M239 299h12M261 299h8M274 299h3M279 299h29M311 299h37M350 299h3M355 299h3M365 299h2M368 299h20M391 299h61M454 299h28M484 299h21M650 299h6M660 299h13M674 299h13M690 299h13M707 299h13M723 299h13M739 299h19M766 299h6M238 300h6M245 300h4M251 300h5M265 300h19M288 300h2M300 300h42M393 300h15M412 300h62M477 300h7M488 300h17M656 300h7M670 300h7M686 300h7M703 300h7M719 300h7M735 300h7M751 300h7M239 301h17M259 301h2M263 301h7M275 301h64M393 301h3M401 301h18M421 301h6M429 301h2M433 301h54M490 301h10M501 301h4M239 302h84M325 302h2M328 302h11M393 302h8M404 302h36M451 302h50M670 302h5M688 302h5M703 302h5M720 302h5M735 302h5M749 302h8M765 302h6M240 303h99M393 303h41M441 303h18M462 303h4M467 303h50M519 303h5M531 303h10M546 303h2M666 303h2M673 303h10M691 303h10M706 303h10M723 303h10M738 303h11M750 303h8M759 303h6M766 303h15M260 304h79M393 304h27M426 304h41M468 304h2M474 304h2M484 304h67M669 304h89M759 304h28M280 305h41M393 305h15M410 305h24M438 305h5M445 305h3M451 305h2M473 305h11M489 305h2M495 305h2M501 305h52M673 305h18M692 305h66M759 305h6M766 305h15M300 306h1M393 306h6M401 306h50M452 306h2M459 306h5M475 306h18M498 306h3M516 306h12M532 306h13M547 306h9M677 306h10M692 306h13M707 306h13M724 306h13M739 306h16M756 306h2M765 306h6M402 307h5M415 307h7M425 307h42M468 307h5M475 307h7M484 307h37M528 307h7M543 307h7M558 307h1M688 307h7M703 307h7M720 307h7M735 307h7M752 307h6M457 308h3M462 308h22M490 308h4M499 308h10M511 308h10M387 309h5M419 309h1M431 309h5M446 309h5M462 309h5M478 309h5M488 309h13M512 309h9M526 309h5M542 309h5M560 309h4M689 309h3M703 309h5M719 309h5M735 309h5M751 309h5M382 310h10M434 310h10M449 310h10M465 310h10M481 310h10M498 310h10M514 310h6M521 310h3M529 310h10M545 310h10M563 310h4M693 310h7M706 310h10M722 310h10M738 310h10M749 310h9M765 310h6M377 311h15M437 311h133M693 311h65M759 311h6M766 311h15M372 312h20M446 312h116M563 312h10M693 312h65M759 312h28M367 313h25M450 313h13M466 313h13M482 313h13M499 313h13M515 313h13M530 313h13M546 313h13M564 313h11M693 313h11M707 313h13M723 313h13M739 313h19M759 313h6M766 313h15M362 314h28M450 314h3M462 314h7M478 314h7M495 314h7M511 314h7M526 314h7M542 314h7M560 314h7M576 314h2M693 314h1M703 314h7M719 314h7M735 314h7M749 314h9M765 314h6M357 315h28M386 315h3M352 316h33M463 316h5M480 316h5M495 316h5M510 316h5M528 316h5M544 316h5M558 316h5M575 316h5M702 316h5M719 316h5M735 316h5M751 316h5M347 317h35M456 317h3M466 317h10M483 317h10M498 317h10M513 317h10M531 317h10M547 317h10M561 317h10M578 317h8M693 317h8M705 317h10M722 317h10M738 317h20M764 317h6M343 318h35M458 318h131M693 318h65M759 318h5M765 318h15M343 319h31M460 319h70M531 319h61M693 319h65M759 319h27M343 320h27M462 320h1M467 320h13M484 320h13M499 320h13M514 320h13M532 320h13M548 320h13M562 320h13M579 320h13M594 320h1M693 320h12M706 320h13M723 320h13M739 320h19M759 320h5M765 320h15M343 321h24M464 321h6M480 321h7M495 321h7M510 321h7M528 321h7M544 321h7M558 321h7M575 321h7M590 321h7M693 321h2M702 321h7M719 321h7M735 321h7M748 321h10M764 321h6M343 322h20M343 323h15M466 323h1M479 323h5M494 323h5M511 323h5M527 323h5M543 323h5M559 323h5M575 323h5M591 323h5M702 323h5M719 323h5M735 323h5M752 323h5M343 324h10M466 324h9M482 324h10M497 324h10M514 324h10M530 324h10M546 324h10M562 324h10M578 324h10M594 324h10M693 324h8M705 324h10M722 324h10M738 324h15M755 324h3M763 324h6M343 325h5M466 325h148M693 325h65M759 325h4M764 325h15M466 326h152M693 326h65M759 326h26M466 327h13M483 327h13M498 327h13M515 327h13M531 327h13M547 327h13M563 327h13M579 327h13M595 327h13M611 327h12M693 327h12M706 327h13M723 327h13M739 327h19M759 327h4M764 327h15M466 328h3M479 328h7M494 328h7M511 328h7M527 328h7M543 328h7M559 328h7M575 328h7M591 328h7M607 328h7M624 328h3M693 328h2M702 328h7M719 328h7M735 328h7M747 328h11M763 328h6M466 330h2M479 330h5M495 330h5M511 330h5M528 330h5M543 330h5M559 330h5M575 330h5M591 330h5M607 330h5M624 330h5M702 330h5M719 330h5M735 330h5M751 330h5M466 331h10M482 331h10M498 331h10M514 331h10M531 331h10M546 331h10M562 331h10M578 331h10M594 331h10M610 331h10M627 331h10M693 331h6M705 331h10M722 331h10M738 331h15M754 331h4M763 331h6M466 332h179M693 332h65M759 332h4M764 332h15M467 333h202M693 333h65M759 333h26M471 334h9M483 334h13M499 334h13M515 334h13M532 334h13M547 334h13M563 334h13M579 334h13M595 334h13M611 334h13M628 334h13M643 334h13M659 334h13M675 334h13M690 334h2M693 334h10M706 334h13M723 334h13M739 334h19M759 334h4M764 334h15M479 335h7M495 335h7M511 335h7M528 335h7M543 335h7M559 335h7M575 335h7M591 335h7M607 335h7M624 335h7M639 335h7M655 335h7M671 335h7M686 335h7M702 335h7M719 335h7M735 335h7M747 335h11M763 335h6M343 337h15M496 337h4M511 337h5M527 337h5M542 337h5M559 337h5M575 337h5M591 337h5M607 337h5M624 337h5M639 337h5M655 337h5M671 337h5M686 337h5M703 337h5M719 337h5M735 337h5M750 337h5M343 338h17M521 338h3M530 338h10M545 338h10M562 338h10M578 338h10M594 338h10M610 338h10M627 338h10M642 338h10M658 338h10M674 338h10M689 338h10M706 338h10M722 338h10M738 338h8M753 338h5M343 339h14M521 339h164M343 340h12M521 340h156M343 341h9M343 342h7M343 343h4M343 344h2M343 349h3M343 350h1M236 357h2M241 357h2M246 357h2M251 357h2M256 357h2M261 357h2M266 357h2M271 357h2M276 357h2M281 357h2M286 357h2M291 357h2M296 357h2M300 357h18"/><path stroke="#acdc00" d="M165 230h20M149 232h4M161 232h4M166 232h4M174 232h13M207 232h5M222 232h5M238 232h5M255 232h5M271 232h5M287 232h5M304 232h5M145 233h4M157 233h4M165 233h1M173 233h5M180 233h7M199 233h5M210 233h10M226 233h9M241 233h10M258 233h10M274 233h10M290 233h10M307 233h7M141 234h4M153 234h4M170 234h4M178 234h9M199 234h20M241 234h73M136 235h5M151 235h2M166 235h4M174 235h4M180 235h7M200 235h14M256 235h58M161 236h5M170 236h4M178 236h2M182 236h4M200 236h8M271 236h1M275 236h13M291 236h13M308 236h6M157 237h4M166 237h4M174 237h4M180 237h1M199 237h1M287 237h7M304 237h7M153 238h4M165 238h1M170 238h4M149 239h4M161 239h4M166 239h4M303 239h5M145 240h4M157 240h4M306 240h8M141 241h4M153 241h4M306 241h7M136 242h5M151 242h2M308 242h1M161 243h1M157 244h4M153 245h4M151 246h2M161 246h4M157 247h4M165 247h1M141 248h1M153 248h4M166 248h3M136 249h5M151 249h2M165 249h5M282 255h2M277 256h6M275 257h7M271 258h7M260 260h1M272 260h5M259 261h10M275 261h5M251 262h28M245 263h33M243 264h13M260 264h13M276 264h2M239 265h7M256 265h7M272 265h5M223 267h5M239 267h5M256 267h5M271 267h5M199 268h5M210 268h5M216 268h4M226 268h10M242 268h10M259 268h10M274 268h1M198 269h76M198 270h1M200 270h73M198 271h1M211 271h13M227 271h13M243 271h13M260 271h13M223 272h7M239 272h7M256 272h7M271 272h1M198 273h1M198 274h1M238 274h5M256 274h5M198 275h1M231 275h4M242 275h9M259 275h10M198 276h1M231 276h20M259 276h2M230 277h32M230 278h16M248 278h10M229 279h24M234 280h5M241 280h9M229 281h5M240 281h5M240 282h1M392 306h1M392 307h1M400 307h2M392 309h3M398 309h5M415 309h4M392 310h4M397 310h1M401 310h10M418 310h10M392 311h45M392 312h54M392 313h8M402 313h13M419 313h13M435 313h13M398 314h7M415 314h7M431 314h7M446 314h4M392 316h5M399 316h5M414 316h5M431 316h5M446 316h5M392 317h5M402 317h10M417 317h10M434 317h10M449 317h7M392 318h66M392 319h68M392 320h9M403 320h13M418 320h13M435 320h13M450 320h12M392 321h2M399 321h7M414 321h7M431 321h7M446 321h7M463 321h1M392 322h2M395 322h4M398 323h5M414 323h5M430 323h5M448 323h5M462 323h4M392 324h7M401 324h10M417 324h10M433 324h10M451 324h10M465 324h1M392 325h74M392 326h57M450 326h16M389 327h12M402 327h13M418 327h13M434 327h13M452 327h13M385 328h6M394 328h11M414 328h7M430 328h7M448 328h7M462 328h4M382 329h3M386 329h7M380 330h9M392 330h1M399 330h5M463 330h3M377 331h8M458 331h2M375 332h8M463 332h3M372 333h9M370 334h9M367 335h9M365 336h9M362 337h10M478 337h5M495 337h1M360 338h10M470 338h6M481 338h10M498 338h10M514 338h7M746 338h6M762 338h6M357 339h11M445 339h1M470 339h51M685 339h73M759 339h3M763 339h15M355 340h11M445 340h76M677 340h81M759 340h25M352 341h12M445 341h3M451 341h13M467 341h13M482 341h13M499 341h13M515 341h13M531 341h13M546 341h13M563 341h13M579 341h13M595 341h13M611 341h13M628 341h13M643 341h13M659 341h13M675 341h13M690 341h13M707 341h13M723 341h13M739 341h19M759 341h3M763 341h15M350 342h11M447 342h7M463 342h7M478 342h7M495 342h7M511 342h7M527 342h7M542 342h7M559 342h7M575 342h7M591 342h7M607 342h7M624 342h7M639 342h7M655 342h7M671 342h7M686 342h7M703 342h7M719 342h7M735 342h7M746 342h11M762 342h6M347 343h12M345 344h12M447 344h5M463 344h5M479 344h5M495 344h5M512 344h5M526 344h5M543 344h5M560 344h5M574 344h5M591 344h5M606 344h5M623 344h5M639 344h5M655 344h5M671 344h5M687 344h5M702 344h5M719 344h5M735 344h5M751 344h5M343 345h12M450 345h10M466 345h10M482 345h10M498 345h10M515 345h10M529 345h10M546 345h10M563 345h10M577 345h10M594 345h10M609 345h10M626 345h10M642 345h10M658 345h10M674 345h10M690 345h10M705 345h10M722 345h10M738 345h8M754 345h4M343 346h10M343 347h8M343 348h5"/><path stroke="#00f000" d="M225 233h1M219 234h22M214 235h42M186 236h1M211 236h13M226 236h13M242 236h13M259 236h12M181 237h6M207 237h7M222 237h7M238 237h7M255 237h7M271 237h7M180 238h7M199 238h1M174 239h12M199 239h1M206 239h5M223 239h5M239 239h5M255 239h5M271 239h5M287 239h5M165 240h1M170 240h8M181 240h1M186 240h1M200 240h4M209 240h10M226 240h10M242 240h10M258 240h10M274 240h10M290 240h10M166 241h8M178 241h2M182 241h5M199 241h107M165 242h5M176 242h2M180 242h2M185 242h2M199 242h109M162 243h4M178 243h2M182 243h5M200 243h8M210 243h13M227 243h13M243 243h13M259 243h13M275 243h13M291 243h13M174 244h4M180 244h7M199 244h1M206 244h7M223 244h7M239 244h7M255 244h7M271 244h7M287 244h7M170 245h4M178 245h6M199 245h1M166 246h4M174 246h8M199 246h1M207 246h5M224 246h5M240 246h5M255 246h5M271 246h5M286 246h4M170 247h8M186 247h1M199 247h5M210 247h10M227 247h10M243 247h10M258 247h10M274 247h10M169 248h5M178 248h2M186 248h2M199 248h90M174 249h4M182 249h6M199 249h89M178 250h4M183 250h6M198 250h10M211 250h13M228 250h13M244 250h13M259 250h13M275 250h12M176 251h2M182 251h1M186 251h3M198 251h1M207 251h7M224 251h7M240 251h7M255 251h7M271 251h7M286 251h1M186 252h3M199 252h1M187 253h3M197 253h3M206 253h5M223 253h5M239 253h5M256 253h5M271 253h5M186 254h4M197 254h7M209 254h10M226 254h10M242 254h10M259 254h10M274 254h10M196 255h86M186 256h2M196 256h81M186 257h5M196 257h3M200 257h8M210 257h13M227 257h13M243 257h13M260 257h13M186 258h6M197 258h3M206 258h7M223 258h7M239 258h7M256 258h7M186 259h6M195 259h5M187 260h5M195 260h5M207 260h5M222 260h5M239 260h5M256 260h4M186 261h7M194 261h11M210 261h10M225 261h10M242 261h10M186 262h7M194 262h57M186 263h59M186 264h13M200 264h9M211 264h13M226 264h13M186 265h9M199 265h1M207 265h7M222 265h7M186 266h5M195 266h4M207 267h5M215 268h1M415 330h5M431 330h5M447 330h5M385 331h12M402 331h10M418 331h10M434 331h10M450 331h8M383 332h80M381 333h86M379 334h22M403 334h13M419 334h13M435 334h13M451 334h13M467 334h4M376 335h16M399 335h7M415 335h7M431 335h7M447 335h7M463 335h7M374 336h16M372 337h19M400 337h5M415 337h5M431 337h5M447 337h5M463 337h5M370 338h27M403 338h10M418 338h10M434 338h10M450 338h10M466 338h4M368 339h77M446 339h24M366 340h79M364 341h21M387 341h13M404 341h13M419 341h13M435 341h10M361 342h32M400 342h7M415 342h7M431 342h7M359 343h27M393 343h6M357 344h47M415 344h5M431 344h5M355 345h30M746 345h6M762 345h6M353 346h24M445 346h313M759 346h3M763 346h15M351 347h17M445 347h313M759 347h25M348 348h12M445 348h3M451 348h13M467 348h13M483 348h13M499 348h13M516 348h13M530 348h13M547 348h13M564 348h13M578 348h13M595 348h13M610 348h13M627 348h13M643 348h13M659 348h13M675 348h13M691 348h13M706 348h13M723 348h13M739 348h19M759 348h3M763 348h15M346 349h10M447 349h7M463 349h7M479 349h7M495 349h7M512 349h7M526 349h7M543 349h7M560 349h7M574 349h7M591 349h7M606 349h7M623 349h7M639 349h7M655 349h7M671 349h7M687 349h7M702 349h7M719 349h7M735 349h7M746 349h12M762 349h6M344 350h9M343 351h6M511 351h5M526 351h5M543 351h5M558 351h5M575 351h5M591 351h5M606 351h5M622 351h5M639 351h5M656 351h5M672 351h5M688 351h5M702 351h5M718 351h5M735 351h5M343 352h3M506 352h1M514 352h10M529 352h10M546 352h10M561 352h10M578 352h10M594 352h10M609 352h10M625 352h10M642 352h10M659 352h10M675 352h10M691 352h10M705 352h10M721 352h10M738 352h13M761 352h6M506 353h239M746 353h12M759 353h2M762 353h15M506 354h252M759 354h24M506 355h5M515 355h13M530 355h13M547 355h13M562 355h13M579 355h13M595 355h13M610 355h13M626 355h13M643 355h13M660 355h13M676 355h13M692 355h13M706 355h13M722 355h13M739 355h6M746 355h12M759 355h2M762 355h15M761 356h6M318 357h12"/><path stroke="#00e0d8" d="M385 345h10M402 345h10M418 345h10M434 345h10M377 346h68M368 347h77M360 348h39M403 348h13M419 348h13M435 348h10M356 349h36M399 349h7M415 349h7M431 349h7M353 350h32M386 350h14M349 351h24M446 351h5M463 351h5M479 351h5M494 351h5M751 351h5M346 352h14M440 352h3M449 352h10M466 352h10M482 352h10M497 352h9M754 352h4M343 353h11M440 353h66M745 353h1M343 354h5M440 354h66M440 355h7M450 355h13M467 355h13M483 355h13M498 355h8M745 355h1M330 357h15"/><path stroke="#0040ff" d="M385 350h1M373 351h19M399 351h5M415 351h5M430 351h5M360 352h36M402 352h10M418 352h10M433 352h7M354 353h86M348 354h92M343 355h40M385 355h15M403 355h13M419 355h13M434 355h6M345 357h23"/><path stroke="#6c6c74" d="M314 232h4M453 232h4M314 233h4M453 233h4M314 234h4M453 234h4M314 235h4M453 235h4M314 236h4M453 236h4M314 237h4M453 237h4M314 238h4M453 238h4M314 239h4M453 239h4M314 240h4M453 240h4M314 241h4M453 241h4M314 242h4M453 242h4M314 243h4M453 243h4M314 244h4M453 244h4M314 245h4M453 245h4M314 246h4M453 246h4M314 247h4M453 247h4M314 248h4M453 248h4M314 249h4M453 249h4M314 250h4M453 250h4M314 251h4M453 251h4M314 252h4M453 252h4M314 253h4M453 253h4M314 254h4M453 254h4M314 255h4M453 255h4M314 256h4M453 256h4M314 257h4M453 257h4M314 258h4M453 258h4M314 259h4M453 259h4M314 260h4M453 260h4M314 261h4M453 261h4M314 262h4M453 262h4M314 263h4M453 263h4M314 264h4M453 264h4M314 265h4M453 265h4M314 266h4M453 266h4M314 267h4M453 267h4M314 268h4M453 268h4M314 269h4M453 269h4M314 270h4M453 270h4M314 271h4M453 271h4M314 272h4M453 272h4M314 273h4M453 273h4M314 274h4M453 274h4M314 275h4M453 275h4M314 276h4M453 276h4M314 277h4M453 277h4M314 278h4M453 278h4M314 279h4M453 279h4M314 280h4M453 280h4M314 281h4M453 281h4M314 282h4M453 282h4M314 283h4M453 283h4M314 284h4M453 284h4M314 285h4M453 285h4M314 286h4M453 286h4M199 301h4M339 301h4M199 302h4M339 302h4M199 303h4M339 303h4M199 304h4M339 304h4M199 305h4M339 305h4M199 306h4M339 306h4M199 307h4M339 307h4M199 308h4M339 308h4M199 309h4M339 309h4M199 310h4M339 310h4M199 311h4M339 311h4M199 312h4M339 312h4M199 313h4M339 313h4M199 314h4M339 314h4M199 315h4M339 315h4M199 316h4M339 316h4M199 317h4M339 317h4M199 318h4M339 318h4M199 319h4M339 319h4M199 320h4M339 320h4M199 321h4M339 321h4M199 322h4M339 322h4M199 323h4M339 323h4M199 324h4M339 324h4M199 325h4M339 325h4M199 326h4M339 326h4M199 327h4M339 327h4M199 328h4M339 328h4M199 329h4M339 329h4M199 330h4M339 330h4M199 331h4M339 331h4M199 332h4M339 332h4M199 333h4M339 333h4M199 334h4M339 334h4M199 335h4M339 335h4M199 336h4M339 336h4M199 337h4M339 337h4M199 338h4M339 338h4M199 339h4M339 339h4M199 340h4M339 340h4M199 341h4M339 341h4M199 342h4M339 342h4M199 343h4M339 343h4M199 344h4M339 344h4M199 345h4M339 345h4M199 346h4M339 346h4M199 347h4M339 347h4M199 348h4M339 348h4M199 349h4M339 349h4M199 350h4M339 350h4M199 351h4M339 351h4M199 352h4M339 352h4M199 353h4M339 353h4M199 354h4M339 354h4M199 355h4M339 355h4"/></g></svg><svg width="92" height="28" viewBox="0 0 92 28" shape-rendering="crispEdges" style="position:absolute;left:0;top:0"><rect x="0" y="4" width="22" height="1" fill="#e4e4e4"/><rect x="22" y="4" width="1" height="1" fill="#000000"/><rect x="0" y="5" width="1" height="1" fill="#e4e4e4"/><rect x="21" y="5" width="1" height="1" fill="#5a9272"/><rect x="22" y="5" width="1" height="1" fill="#000000"/><rect x="0" y="6" width="1" height="1" fill="#e4e4e4"/><rect x="21" y="6" width="1" height="1" fill="#5a9272"/><rect x="22" y="6" width="1" height="1" fill="#000000"/><rect x="0" y="7" width="1" height="1" fill="#e4e4e4"/><rect x="6" y="7" width="8" height="1" fill="#5a9272"/><rect x="21" y="7" width="1" height="1" fill="#5a9272"/><rect x="22" y="7" width="1" height="1" fill="#000000"/><rect x="0" y="8" width="1" height="1" fill="#e4e4e4"/><rect x="6" y="8" width="1" height="1" fill="#5a9272"/><rect x="7" y="8" width="6" height="1" fill="#e4e4e4"/><rect x="13" y="8" width="1" height="1" fill="#5a9272"/><rect x="21" y="8" width="1" height="1" fill="#5a9272"/><rect x="22" y="8" width="1" height="1" fill="#000000"/><rect x="0" y="9" width="1" height="1" fill="#e4e4e4"/><rect x="6" y="9" width="1" height="1" fill="#5a9272"/><rect x="7" y="9" width="1" height="1" fill="#e4e4e4"/><rect x="14" y="9" width="1" height="1" fill="#e4e4e4"/><rect x="15" y="9" width="1" height="1" fill="#5a9272"/><rect x="21" y="9" width="1" height="1" fill="#5a9272"/><rect x="22" y="9" width="1" height="1" fill="#000000"/><rect x="0" y="10" width="1" height="1" fill="#e4e4e4"/><rect x="6" y="10" width="1" height="1" fill="#5a9272"/><rect x="7" y="10" width="1" height="1" fill="#e4e4e4"/><rect x="14" y="10" width="3" height="1" fill="#5a9272"/><rect x="21" y="10" width="1" height="1" fill="#5a9272"/><rect x="22" y="10" width="1" height="1" fill="#000000"/><rect x="0" y="11" width="1" height="1" fill="#e4e4e4"/><rect x="6" y="11" width="1" height="1" fill="#5a9272"/><rect x="7" y="11" width="1" height="1" fill="#e4e4e4"/><rect x="14" y="11" width="2" height="1" fill="#e4e4e4"/><rect x="16" y="11" width="1" height="1" fill="#5a9272"/><rect x="17" y="11" width="1" height="1" fill="#e4e4e4"/><rect x="21" y="11" width="1" height="1" fill="#5a9272"/><rect x="22" y="11" width="1" height="1" fill="#000000"/><rect x="0" y="12" width="1" height="1" fill="#e4e4e4"/><rect x="6" y="12" width="1" height="1" fill="#5a9272"/><rect x="7" y="12" width="1" height="1" fill="#e4e4e4"/><rect x="16" y="12" width="1" height="1" fill="#5a9272"/><rect x="17" y="12" width="1" height="1" fill="#e4e4e4"/><rect x="21" y="12" width="1" height="1" fill="#5a9272"/><rect x="22" y="12" width="1" height="1" fill="#000000"/><rect x="0" y="13" width="1" height="1" fill="#e4e4e4"/><rect x="6" y="13" width="1" height="1" fill="#5a9272"/><rect x="7" y="13" width="1" height="1" fill="#e4e4e4"/><rect x="16" y="13" width="1" height="1" fill="#5a9272"/><rect x="17" y="13" width="1" height="1" fill="#e4e4e4"/><rect x="21" y="13" width="1" height="1" fill="#5a9272"/><rect x="22" y="13" width="1" height="1" fill="#000000"/><rect x="0" y="14" width="1" height="1" fill="#e4e4e4"/><rect x="6" y="14" width="1" height="1" fill="#5a9272"/><rect x="7" y="14" width="1" height="1" fill="#e4e4e4"/><rect x="16" y="14" width="1" height="1" fill="#5a9272"/><rect x="17" y="14" width="1" height="1" fill="#e4e4e4"/><rect x="21" y="14" width="1" height="1" fill="#5a9272"/><rect x="22" y="14" width="1" height="1" fill="#000000"/><rect x="0" y="15" width="1" height="1" fill="#e4e4e4"/><rect x="6" y="15" width="1" height="1" fill="#5a9272"/><rect x="7" y="15" width="1" height="1" fill="#e4e4e4"/><rect x="16" y="15" width="1" height="1" fill="#5a9272"/><rect x="17" y="15" width="1" height="1" fill="#e4e4e4"/><rect x="21" y="15" width="1" height="1" fill="#5a9272"/><rect x="22" y="15" width="1" height="1" fill="#000000"/><rect x="0" y="16" width="1" height="1" fill="#e4e4e4"/><rect x="6" y="16" width="1" height="1" fill="#5a9272"/><rect x="7" y="16" width="1" height="1" fill="#e4e4e4"/><rect x="16" y="16" width="1" height="1" fill="#5a9272"/><rect x="17" y="16" width="1" height="1" fill="#e4e4e4"/><rect x="21" y="16" width="1" height="1" fill="#5a9272"/><rect x="22" y="16" width="1" height="1" fill="#000000"/><rect x="0" y="17" width="1" height="1" fill="#e4e4e4"/><rect x="6" y="17" width="1" height="1" fill="#5a9272"/><rect x="7" y="17" width="1" height="1" fill="#e4e4e4"/><rect x="16" y="17" width="1" height="1" fill="#5a9272"/><rect x="17" y="17" width="1" height="1" fill="#e4e4e4"/><rect x="21" y="17" width="1" height="1" fill="#5a9272"/><rect x="22" y="17" width="1" height="1" fill="#000000"/><rect x="0" y="18" width="1" height="1" fill="#e4e4e4"/><rect x="6" y="18" width="1" height="1" fill="#5a9272"/><rect x="7" y="18" width="1" height="1" fill="#e4e4e4"/><rect x="16" y="18" width="1" height="1" fill="#5a9272"/><rect x="17" y="18" width="1" height="1" fill="#e4e4e4"/><rect x="21" y="18" width="1" height="1" fill="#5a9272"/><rect x="22" y="18" width="1" height="1" fill="#000000"/><rect x="0" y="19" width="1" height="1" fill="#e4e4e4"/><rect x="6" y="19" width="11" height="1" fill="#5a9272"/><rect x="17" y="19" width="1" height="1" fill="#e4e4e4"/><rect x="21" y="19" width="1" height="1" fill="#5a9272"/><rect x="22" y="19" width="1" height="1" fill="#000000"/><rect x="0" y="20" width="1" height="1" fill="#e4e4e4"/><rect x="7" y="20" width="11" height="1" fill="#e4e4e4"/><rect x="21" y="20" width="1" height="1" fill="#5a9272"/><rect x="22" y="20" width="1" height="1" fill="#000000"/><rect x="0" y="21" width="1" height="1" fill="#e4e4e4"/><rect x="21" y="21" width="1" height="1" fill="#5a9272"/><rect x="22" y="21" width="1" height="1" fill="#000000"/><rect x="0" y="22" width="1" height="1" fill="#e4e4e4"/><rect x="21" y="22" width="1" height="1" fill="#5a9272"/><rect x="22" y="22" width="1" height="1" fill="#000000"/><rect x="0" y="23" width="1" height="1" fill="#e4e4e4"/><rect x="21" y="23" width="1" height="1" fill="#5a9272"/><rect x="22" y="23" width="1" height="1" fill="#000000"/><rect x="0" y="24" width="1" height="1" fill="#e4e4e4"/><rect x="1" y="24" width="21" height="1" fill="#5a9272"/><rect x="22" y="24" width="1" height="1" fill="#000000"/><rect x="0" y="25" width="23" height="1" fill="#000000"/><rect x="23" y="4" width="22" height="1" fill="#e4e4e4"/><rect x="45" y="4" width="1" height="1" fill="#000000"/><rect x="23" y="5" width="1" height="1" fill="#e4e4e4"/><rect x="44" y="5" width="1" height="1" fill="#5a9272"/><rect x="45" y="5" width="1" height="1" fill="#000000"/><rect x="23" y="6" width="1" height="1" fill="#e4e4e4"/><rect x="44" y="6" width="1" height="1" fill="#5a9272"/><rect x="45" y="6" width="1" height="1" fill="#000000"/><rect x="23" y="7" width="1" height="1" fill="#e4e4e4"/><rect x="44" y="7" width="1" height="1" fill="#5a9272"/><rect x="45" y="7" width="1" height="1" fill="#000000"/><rect x="23" y="8" width="1" height="1" fill="#e4e4e4"/><rect x="37" y="8" width="4" height="1" fill="#4a8262"/><rect x="44" y="8" width="1" height="1" fill="#5a9272"/><rect x="45" y="8" width="1" height="1" fill="#000000"/><rect x="23" y="9" width="1" height="1" fill="#e4e4e4"/><rect x="36" y="9" width="1" height="1" fill="#4a8262"/><rect x="37" y="9" width="4" height="1" fill="#e4e4e4"/><rect x="41" y="9" width="1" height="1" fill="#4a8262"/><rect x="44" y="9" width="1" height="1" fill="#5a9272"/><rect x="45" y="9" width="1" height="1" fill="#000000"/><rect x="23" y="10" width="1" height="1" fill="#e4e4e4"/><rect x="35" y="10" width="1" height="1" fill="#4a8262"/><rect x="40" y="10" width="2" height="1" fill="#5a9272"/><rect x="44" y="10" width="1" height="1" fill="#5a9272"/><rect x="45" y="10" width="1" height="1" fill="#000000"/><rect x="23" y="11" width="1" height="1" fill="#e4e4e4"/><rect x="28" y="11" width="3" height="1" fill="#4a8262"/><rect x="40" y="11" width="3" height="1" fill="#5a9272"/><rect x="44" y="11" width="1" height="1" fill="#5a9272"/><rect x="45" y="11" width="1" height="1" fill="#000000"/><rect x="23" y="12" width="1" height="1" fill="#e4e4e4"/><rect x="27" y="12" width="1" height="1" fill="#4a8262"/><rect x="28" y="12" width="1" height="1" fill="#e4e4e4"/><rect x="29" y="12" width="1" height="1" fill="#4a8262"/><rect x="30" y="12" width="1" height="1" fill="#e4e4e4"/><rect x="31" y="12" width="6" height="1" fill="#4a8262"/><rect x="37" y="12" width="1" height="1" fill="#e4e4e4"/><rect x="40" y="12" width="1" height="1" fill="#e4e4e4"/><rect x="44" y="12" width="1" height="1" fill="#5a9272"/><rect x="45" y="12" width="1" height="1" fill="#000000"/><rect x="23" y="13" width="1" height="1" fill="#e4e4e4"/><rect x="27" y="13" width="2" height="1" fill="#4a8262"/><rect x="29" y="13" width="1" height="1" fill="#e4e4e4"/><rect x="30" y="13" width="1" height="1" fill="#4a8262"/><rect x="31" y="13" width="1" height="1" fill="#e4e4e4"/><rect x="32" y="13" width="1" height="1" fill="#4a8262"/><rect x="33" y="13" width="1" height="1" fill="#e4e4e4"/><rect x="34" y="13" width="1" height="1" fill="#4a8262"/><rect x="35" y="13" width="1" height="1" fill="#e4e4e4"/><rect x="36" y="13" width="2" height="1" fill="#4a8262"/><rect x="40" y="13" width="1" height="1" fill="#e4e4e4"/><rect x="44" y="13" width="1" height="1" fill="#5a9272"/><rect x="45" y="13" width="1" height="1" fill="#000000"/><rect x="23" y="14" width="1" height="1" fill="#e4e4e4"/><rect x="27" y="14" width="1" height="1" fill="#4a8262"/><rect x="28" y="14" width="1" height="1" fill="#e4e4e4"/><rect x="29" y="14" width="1" height="1" fill="#4a8262"/><rect x="30" y="14" width="1" height="1" fill="#e4e4e4"/><rect x="31" y="14" width="1" height="1" fill="#4a8262"/><rect x="32" y="14" width="1" height="1" fill="#e4e4e4"/><rect x="33" y="14" width="10" height="1" fill="#4a8262"/><rect x="44" y="14" width="1" height="1" fill="#5a9272"/><rect x="45" y="14" width="1" height="1" fill="#000000"/><rect x="23" y="15" width="1" height="1" fill="#e4e4e4"/><rect x="27" y="15" width="2" height="1" fill="#4a8262"/><rect x="29" y="15" width="1" height="1" fill="#e4e4e4"/><rect x="30" y="15" width="1" height="1" fill="#4a8262"/><rect x="31" y="15" width="1" height="1" fill="#e4e4e4"/><rect x="32" y="15" width="10" height="1" fill="#4a8262"/><rect x="42" y="15" width="1" height="1" fill="#e4e4e4"/><rect x="44" y="15" width="1" height="1" fill="#5a9272"/><rect x="45" y="15" width="1" height="1" fill="#000000"/><rect x="23" y="16" width="1" height="1" fill="#e4e4e4"/><rect x="27" y="16" width="1" height="1" fill="#4a8262"/><rect x="28" y="16" width="1" height="1" fill="#e4e4e4"/><rect x="29" y="16" width="12" height="1" fill="#4a8262"/><rect x="41" y="16" width="1" height="1" fill="#e4e4e4"/><rect x="44" y="16" width="1" height="1" fill="#5a9272"/><rect x="45" y="16" width="1" height="1" fill="#000000"/><rect x="23" y="17" width="1" height="1" fill="#e4e4e4"/><rect x="27" y="17" width="2" height="1" fill="#4a8262"/><rect x="29" y="17" width="1" height="1" fill="#e4e4e4"/><rect x="30" y="17" width="10" height="1" fill="#4a8262"/><rect x="40" y="17" width="1" height="1" fill="#e4e4e4"/><rect x="44" y="17" width="1" height="1" fill="#5a9272"/><rect x="45" y="17" width="1" height="1" fill="#000000"/><rect x="23" y="18" width="1" height="1" fill="#e4e4e4"/><rect x="27" y="18" width="1" height="1" fill="#4a8262"/><rect x="28" y="18" width="1" height="1" fill="#e4e4e4"/><rect x="29" y="18" width="10" height="1" fill="#4a8262"/><rect x="39" y="18" width="1" height="1" fill="#e4e4e4"/><rect x="44" y="18" width="1" height="1" fill="#5a9272"/><rect x="45" y="18" width="1" height="1" fill="#000000"/><rect x="23" y="19" width="1" height="1" fill="#e4e4e4"/><rect x="27" y="19" width="11" height="1" fill="#4a8262"/><rect x="38" y="19" width="1" height="1" fill="#e4e4e4"/><rect x="44" y="19" width="1" height="1" fill="#5a9272"/><rect x="45" y="19" width="1" height="1" fill="#000000"/><rect x="23" y="20" width="1" height="1" fill="#e4e4e4"/><rect x="28" y="20" width="11" height="1" fill="#e4e4e4"/><rect x="44" y="20" width="1" height="1" fill="#5a9272"/><rect x="45" y="20" width="1" height="1" fill="#000000"/><rect x="23" y="21" width="1" height="1" fill="#e4e4e4"/><rect x="44" y="21" width="1" height="1" fill="#5a9272"/><rect x="45" y="21" width="1" height="1" fill="#000000"/><rect x="23" y="22" width="1" height="1" fill="#e4e4e4"/><rect x="44" y="22" width="1" height="1" fill="#5a9272"/><rect x="45" y="22" width="1" height="1" fill="#000000"/><rect x="23" y="23" width="1" height="1" fill="#e4e4e4"/><rect x="44" y="23" width="1" height="1" fill="#5a9272"/><rect x="45" y="23" width="1" height="1" fill="#000000"/><rect x="23" y="24" width="1" height="1" fill="#e4e4e4"/><rect x="24" y="24" width="21" height="1" fill="#5a9272"/><rect x="45" y="24" width="1" height="1" fill="#000000"/><rect x="23" y="25" width="23" height="1" fill="#000000"/><rect x="46" y="4" width="22" height="1" fill="#e4e4e4"/><rect x="68" y="4" width="1" height="1" fill="#000000"/><rect x="46" y="5" width="1" height="1" fill="#e4e4e4"/><rect x="67" y="5" width="1" height="1" fill="#5a9272"/><rect x="68" y="5" width="1" height="1" fill="#000000"/><rect x="46" y="6" width="1" height="1" fill="#e4e4e4"/><rect x="67" y="6" width="1" height="1" fill="#5a9272"/><rect x="68" y="6" width="1" height="1" fill="#000000"/><rect x="46" y="7" width="1" height="1" fill="#e4e4e4"/><rect x="50" y="7" width="14" height="1" fill="#4a8262"/><rect x="67" y="7" width="1" height="1" fill="#5a9272"/><rect x="68" y="7" width="1" height="1" fill="#000000"/><rect x="46" y="8" width="1" height="1" fill="#e4e4e4"/><rect x="50" y="8" width="2" height="1" fill="#4a8262"/><rect x="52" y="8" width="8" height="1" fill="#e4e4e4"/><rect x="60" y="8" width="1" height="1" fill="#4a8262"/><rect x="61" y="8" width="1" height="1" fill="#e4e4e4"/><rect x="62" y="8" width="1" height="1" fill="#4a8262"/><rect x="63" y="8" width="1" height="1" fill="#e4e4e4"/><rect x="67" y="8" width="1" height="1" fill="#5a9272"/><rect x="68" y="8" width="1" height="1" fill="#000000"/><rect x="46" y="9" width="1" height="1" fill="#e4e4e4"/><rect x="50" y="9" width="2" height="1" fill="#4a8262"/><rect x="52" y="9" width="1" height="1" fill="#e4e4e4"/><rect x="53" y="9" width="7" height="1" fill="#78a88a"/><rect x="60" y="9" width="3" height="1" fill="#4a8262"/><rect x="63" y="9" width="1" height="1" fill="#e4e4e4"/><rect x="67" y="9" width="1" height="1" fill="#5a9272"/><rect x="68" y="9" width="1" height="1" fill="#000000"/><rect x="46" y="10" width="1" height="1" fill="#e4e4e4"/><rect x="50" y="10" width="2" height="1" fill="#4a8262"/><rect x="52" y="10" width="1" height="1" fill="#e4e4e4"/><rect x="53" y="10" width="7" height="1" fill="#78a88a"/><rect x="60" y="10" width="3" height="1" fill="#4a8262"/><rect x="63" y="10" width="1" height="1" fill="#e4e4e4"/><rect x="67" y="10" width="1" height="1" fill="#5a9272"/><rect x="68" y="10" width="1" height="1" fill="#000000"/><rect x="46" y="11" width="1" height="1" fill="#e4e4e4"/><rect x="50" y="11" width="2" height="1" fill="#4a8262"/><rect x="52" y="11" width="1" height="1" fill="#e4e4e4"/><rect x="53" y="11" width="7" height="1" fill="#78a88a"/><rect x="60" y="11" width="3" height="1" fill="#4a8262"/><rect x="63" y="11" width="1" height="1" fill="#e4e4e4"/><rect x="67" y="11" width="1" height="1" fill="#5a9272"/><rect x="68" y="11" width="1" height="1" fill="#000000"/><rect x="46" y="12" width="1" height="1" fill="#e4e4e4"/><rect x="50" y="12" width="2" height="1" fill="#4a8262"/><rect x="52" y="12" width="1" height="1" fill="#e4e4e4"/><rect x="53" y="12" width="7" height="1" fill="#78a88a"/><rect x="60" y="12" width="3" height="1" fill="#4a8262"/><rect x="63" y="12" width="1" height="1" fill="#e4e4e4"/><rect x="67" y="12" width="1" height="1" fill="#5a9272"/><rect x="68" y="12" width="1" height="1" fill="#000000"/><rect x="46" y="13" width="1" height="1" fill="#e4e4e4"/><rect x="50" y="13" width="13" height="1" fill="#4a8262"/><rect x="63" y="13" width="1" height="1" fill="#e4e4e4"/><rect x="67" y="13" width="1" height="1" fill="#5a9272"/><rect x="68" y="13" width="1" height="1" fill="#000000"/><rect x="46" y="14" width="1" height="1" fill="#e4e4e4"/><rect x="50" y="14" width="13" height="1" fill="#4a8262"/><rect x="63" y="14" width="1" height="1" fill="#e4e4e4"/><rect x="67" y="14" width="1" height="1" fill="#5a9272"/><rect x="68" y="14" width="1" height="1" fill="#000000"/><rect x="46" y="15" width="1" height="1" fill="#e4e4e4"/><rect x="50" y="15" width="13" height="1" fill="#4a8262"/><rect x="63" y="15" width="1" height="1" fill="#e4e4e4"/><rect x="67" y="15" width="1" height="1" fill="#5a9272"/><rect x="68" y="15" width="1" height="1" fill="#000000"/><rect x="46" y="16" width="1" height="1" fill="#e4e4e4"/><rect x="50" y="16" width="9" height="1" fill="#4a8262"/><rect x="59" y="16" width="1" height="1" fill="#e4e4e4"/><rect x="60" y="16" width="3" height="1" fill="#4a8262"/><rect x="63" y="16" width="1" height="1" fill="#e4e4e4"/><rect x="67" y="16" width="1" height="1" fill="#5a9272"/><rect x="68" y="16" width="1" height="1" fill="#000000"/><rect x="46" y="17" width="1" height="1" fill="#e4e4e4"/><rect x="50" y="17" width="9" height="1" fill="#4a8262"/><rect x="59" y="17" width="1" height="1" fill="#e4e4e4"/><rect x="60" y="17" width="1" height="1" fill="#b4dcc4"/><rect x="61" y="17" width="2" height="1" fill="#4a8262"/><rect x="63" y="17" width="1" height="1" fill="#e4e4e4"/><rect x="67" y="17" width="1" height="1" fill="#5a9272"/><rect x="68" y="17" width="1" height="1" fill="#000000"/><rect x="46" y="18" width="1" height="1" fill="#e4e4e4"/><rect x="50" y="18" width="9" height="1" fill="#4a8262"/><rect x="59" y="18" width="1" height="1" fill="#e4e4e4"/><rect x="60" y="18" width="3" height="1" fill="#4a8262"/><rect x="63" y="18" width="1" height="1" fill="#e4e4e4"/><rect x="67" y="18" width="1" height="1" fill="#5a9272"/><rect x="68" y="18" width="1" height="1" fill="#000000"/><rect x="46" y="19" width="1" height="1" fill="#e4e4e4"/><rect x="51" y="19" width="12" height="1" fill="#4a8262"/><rect x="63" y="19" width="1" height="1" fill="#e4e4e4"/><rect x="67" y="19" width="1" height="1" fill="#5a9272"/><rect x="68" y="19" width="1" height="1" fill="#000000"/><rect x="46" y="20" width="1" height="1" fill="#e4e4e4"/><rect x="52" y="20" width="11" height="1" fill="#e4e4e4"/><rect x="67" y="20" width="1" height="1" fill="#5a9272"/><rect x="68" y="20" width="1" height="1" fill="#000000"/><rect x="46" y="21" width="1" height="1" fill="#e4e4e4"/><rect x="67" y="21" width="1" height="1" fill="#5a9272"/><rect x="68" y="21" width="1" height="1" fill="#000000"/><rect x="46" y="22" width="1" height="1" fill="#e4e4e4"/><rect x="67" y="22" width="1" height="1" fill="#5a9272"/><rect x="68" y="22" width="1" height="1" fill="#000000"/><rect x="46" y="23" width="1" height="1" fill="#e4e4e4"/><rect x="67" y="23" width="1" height="1" fill="#5a9272"/><rect x="68" y="23" width="1" height="1" fill="#000000"/><rect x="46" y="24" width="1" height="1" fill="#e4e4e4"/><rect x="47" y="24" width="21" height="1" fill="#5a9272"/><rect x="68" y="24" width="1" height="1" fill="#000000"/><rect x="46" y="25" width="23" height="1" fill="#000000"/><rect x="69" y="4" width="22" height="1" fill="#e4e4e4"/><rect x="91" y="4" width="1" height="1" fill="#000000"/><rect x="69" y="5" width="1" height="1" fill="#e4e4e4"/><rect x="90" y="5" width="1" height="1" fill="#5a9272"/><rect x="91" y="5" width="1" height="1" fill="#000000"/><rect x="69" y="6" width="1" height="1" fill="#e4e4e4"/><rect x="90" y="6" width="1" height="1" fill="#5a9272"/><rect x="91" y="6" width="1" height="1" fill="#000000"/><rect x="69" y="7" width="1" height="1" fill="#e4e4e4"/><rect x="77" y="7" width="9" height="1" fill="#000000"/><rect x="90" y="7" width="1" height="1" fill="#5a9272"/><rect x="91" y="7" width="1" height="1" fill="#000000"/><rect x="69" y="8" width="1" height="1" fill="#e4e4e4"/><rect x="76" y="8" width="1" height="1" fill="#000000"/><rect x="77" y="8" width="8" height="1" fill="#e4e4e4"/><rect x="85" y="8" width="1" height="1" fill="#000000"/><rect x="90" y="8" width="1" height="1" fill="#5a9272"/><rect x="91" y="8" width="1" height="1" fill="#000000"/><rect x="69" y="9" width="1" height="1" fill="#e4e4e4"/><rect x="76" y="9" width="1" height="1" fill="#e4e4e4"/><rect x="77" y="9" width="7" height="1" fill="#000000"/><rect x="84" y="9" width="1" height="1" fill="#e4e4e4"/><rect x="90" y="9" width="1" height="1" fill="#5a9272"/><rect x="91" y="9" width="1" height="1" fill="#000000"/><rect x="69" y="10" width="1" height="1" fill="#e4e4e4"/><rect x="75" y="10" width="1" height="1" fill="#000000"/><rect x="76" y="10" width="8" height="1" fill="#e4e4e4"/><rect x="84" y="10" width="1" height="1" fill="#000000"/><rect x="90" y="10" width="1" height="1" fill="#5a9272"/><rect x="91" y="10" width="1" height="1" fill="#000000"/><rect x="69" y="11" width="1" height="1" fill="#e4e4e4"/><rect x="75" y="11" width="1" height="1" fill="#e4e4e4"/><rect x="76" y="11" width="7" height="1" fill="#000000"/><rect x="83" y="11" width="1" height="1" fill="#e4e4e4"/><rect x="86" y="11" width="1" height="1" fill="#e4e4e4"/><rect x="90" y="11" width="1" height="1" fill="#5a9272"/><rect x="91" y="11" width="1" height="1" fill="#000000"/><rect x="69" y="12" width="1" height="1" fill="#e4e4e4"/><rect x="74" y="12" width="1" height="1" fill="#000000"/><rect x="75" y="12" width="8" height="1" fill="#e4e4e4"/><rect x="83" y="12" width="1" height="1" fill="#000000"/><rect x="85" y="12" width="1" height="1" fill="#e4e4e4"/><rect x="87" y="12" width="1" height="1" fill="#e4e4e4"/><rect x="90" y="12" width="1" height="1" fill="#5a9272"/><rect x="91" y="12" width="1" height="1" fill="#000000"/><rect x="69" y="13" width="1" height="1" fill="#e4e4e4"/><rect x="73" y="13" width="12" height="1" fill="#000000"/><rect x="86" y="13" width="1" height="1" fill="#e4e4e4"/><rect x="90" y="13" width="1" height="1" fill="#5a9272"/><rect x="91" y="13" width="1" height="1" fill="#000000"/><rect x="69" y="14" width="1" height="1" fill="#e4e4e4"/><rect x="72" y="14" width="1" height="1" fill="#000000"/><rect x="73" y="14" width="10" height="1" fill="#b4dcc4"/><rect x="83" y="14" width="1" height="1" fill="#000000"/><rect x="84" y="14" width="1" height="1" fill="#e4e4e4"/><rect x="86" y="14" width="1" height="1" fill="#e4e4e4"/><rect x="90" y="14" width="1" height="1" fill="#5a9272"/><rect x="91" y="14" width="1" height="1" fill="#000000"/><rect x="69" y="15" width="1" height="1" fill="#e4e4e4"/><rect x="72" y="15" width="13" height="1" fill="#000000"/><rect x="86" y="15" width="1" height="1" fill="#e4e4e4"/><rect x="90" y="15" width="1" height="1" fill="#5a9272"/><rect x="91" y="15" width="1" height="1" fill="#000000"/><rect x="69" y="16" width="1" height="1" fill="#e4e4e4"/><rect x="72" y="16" width="1" height="1" fill="#000000"/><rect x="73" y="16" width="11" height="1" fill="#b4dcc4"/><rect x="84" y="16" width="1" height="1" fill="#000000"/><rect x="86" y="16" width="1" height="1" fill="#e4e4e4"/><rect x="90" y="16" width="1" height="1" fill="#5a9272"/><rect x="91" y="16" width="1" height="1" fill="#000000"/><rect x="69" y="17" width="1" height="1" fill="#e4e4e4"/><rect x="72" y="17" width="1" height="1" fill="#000000"/><rect x="73" y="17" width="6" height="1" fill="#b4dcc4"/><rect x="79" y="17" width="4" height="1" fill="#e0c000"/><rect x="83" y="17" width="1" height="1" fill="#b4dcc4"/><rect x="84" y="17" width="1" height="1" fill="#000000"/><rect x="86" y="17" width="1" height="1" fill="#e4e4e4"/><rect x="90" y="17" width="1" height="1" fill="#5a9272"/><rect x="91" y="17" width="1" height="1" fill="#000000"/><rect x="69" y="18" width="1" height="1" fill="#e4e4e4"/><rect x="72" y="18" width="13" height="1" fill="#000000"/><rect x="85" y="18" width="1" height="1" fill="#e4e4e4"/><rect x="90" y="18" width="1" height="1" fill="#5a9272"/><rect x="91" y="18" width="1" height="1" fill="#000000"/><rect x="69" y="19" width="1" height="1" fill="#e4e4e4"/><rect x="73" y="19" width="1" height="1" fill="#000000"/><rect x="74" y="19" width="10" height="1" fill="#b4dcc4"/><rect x="84" y="19" width="1" height="1" fill="#000000"/><rect x="86" y="19" width="1" height="1" fill="#e4e4e4"/><rect x="90" y="19" width="1" height="1" fill="#5a9272"/><rect x="91" y="19" width="1" height="1" fill="#000000"/><rect x="69" y="20" width="1" height="1" fill="#e4e4e4"/><rect x="73" y="20" width="12" height="1" fill="#000000"/><rect x="90" y="20" width="1" height="1" fill="#5a9272"/><rect x="91" y="20" width="1" height="1" fill="#000000"/><rect x="69" y="21" width="1" height="1" fill="#e4e4e4"/><rect x="90" y="21" width="1" height="1" fill="#5a9272"/><rect x="91" y="21" width="1" height="1" fill="#000000"/><rect x="69" y="22" width="1" height="1" fill="#e4e4e4"/><rect x="90" y="22" width="1" height="1" fill="#5a9272"/><rect x="91" y="22" width="1" height="1" fill="#000000"/><rect x="69" y="23" width="1" height="1" fill="#e4e4e4"/><rect x="90" y="23" width="1" height="1" fill="#5a9272"/><rect x="91" y="23" width="1" height="1" fill="#000000"/><rect x="69" y="24" width="1" height="1" fill="#e4e4e4"/><rect x="70" y="24" width="21" height="1" fill="#5a9272"/><rect x="91" y="24" width="1" height="1" fill="#000000"/><rect x="69" y="25" width="23" height="1" fill="#000000"/></svg><svg width="888" height="588" viewBox="0 0 888 588" shape-rendering="crispEdges" style="position:absolute;left:0;top:0"><rect x="872" y="586" width="1" height="1" fill="#e4e4e4"/><rect x="873" y="586" width="1" height="1" fill="#5a9272"/><rect x="874" y="586" width="1" height="1" fill="#5a9272"/><rect x="873" y="585" width="1" height="1" fill="#e4e4e4"/><rect x="874" y="585" width="1" height="1" fill="#5a9272"/><rect x="875" y="585" width="1" height="1" fill="#5a9272"/><rect x="874" y="584" width="1" height="1" fill="#e4e4e4"/><rect x="875" y="584" width="1" height="1" fill="#5a9272"/><rect x="876" y="584" width="1" height="1" fill="#5a9272"/><rect x="875" y="583" width="1" height="1" fill="#e4e4e4"/><rect x="876" y="583" width="1" height="1" fill="#5a9272"/><rect x="877" y="583" width="1" height="1" fill="#5a9272"/><rect x="876" y="582" width="1" height="1" fill="#e4e4e4"/><rect x="877" y="582" width="1" height="1" fill="#5a9272"/><rect x="878" y="582" width="1" height="1" fill="#5a9272"/><rect x="877" y="581" width="1" height="1" fill="#e4e4e4"/><rect x="878" y="581" width="1" height="1" fill="#5a9272"/><rect x="879" y="581" width="1" height="1" fill="#5a9272"/><rect x="878" y="580" width="1" height="1" fill="#e4e4e4"/><rect x="879" y="580" width="1" height="1" fill="#5a9272"/><rect x="880" y="580" width="1" height="1" fill="#5a9272"/><rect x="879" y="579" width="1" height="1" fill="#e4e4e4"/><rect x="880" y="579" width="1" height="1" fill="#5a9272"/><rect x="881" y="579" width="1" height="1" fill="#5a9272"/><rect x="880" y="578" width="1" height="1" fill="#e4e4e4"/><rect x="881" y="578" width="1" height="1" fill="#5a9272"/><rect x="882" y="578" width="1" height="1" fill="#5a9272"/><rect x="881" y="577" width="1" height="1" fill="#e4e4e4"/><rect x="882" y="577" width="1" height="1" fill="#5a9272"/><rect x="883" y="577" width="1" height="1" fill="#5a9272"/><rect x="882" y="576" width="1" height="1" fill="#e4e4e4"/><rect x="883" y="576" width="1" height="1" fill="#5a9272"/><rect x="884" y="576" width="1" height="1" fill="#5a9272"/><rect x="883" y="575" width="1" height="1" fill="#e4e4e4"/><rect x="884" y="575" width="1" height="1" fill="#5a9272"/><rect x="885" y="575" width="1" height="1" fill="#5a9272"/><rect x="884" y="574" width="1" height="1" fill="#e4e4e4"/><rect x="885" y="574" width="1" height="1" fill="#5a9272"/><rect x="886" y="574" width="1" height="1" fill="#5a9272"/><rect x="885" y="573" width="1" height="1" fill="#e4e4e4"/><rect x="886" y="573" width="1" height="1" fill="#5a9272"/><rect x="887" y="573" width="1" height="1" fill="#5a9272"/><rect x="886" y="572" width="1" height="1" fill="#e4e4e4"/><rect x="887" y="572" width="1" height="1" fill="#5a9272"/><rect x="887" y="571" width="1" height="1" fill="#e4e4e4"/><rect x="877" y="586" width="1" height="1" fill="#e4e4e4"/><rect x="878" y="586" width="1" height="1" fill="#5a9272"/><rect x="879" y="586" width="1" height="1" fill="#5a9272"/><rect x="878" y="585" width="1" height="1" fill="#e4e4e4"/><rect x="879" y="585" width="1" height="1" fill="#5a9272"/><rect x="880" y="585" width="1" height="1" fill="#5a9272"/><rect x="879" y="584" width="1" height="1" fill="#e4e4e4"/><rect x="880" y="584" width="1" height="1" fill="#5a9272"/><rect x="881" y="584" width="1" height="1" fill="#5a9272"/><rect x="880" y="583" width="1" height="1" fill="#e4e4e4"/><rect x="881" y="583" width="1" height="1" fill="#5a9272"/><rect x="882" y="583" width="1" height="1" fill="#5a9272"/><rect x="881" y="582" width="1" height="1" fill="#e4e4e4"/><rect x="882" y="582" width="1" height="1" fill="#5a9272"/><rect x="883" y="582" width="1" height="1" fill="#5a9272"/><rect x="882" y="581" width="1" height="1" fill="#e4e4e4"/><rect x="883" y="581" width="1" height="1" fill="#5a9272"/><rect x="884" y="581" width="1" height="1" fill="#5a9272"/><rect x="883" y="580" width="1" height="1" fill="#e4e4e4"/><rect x="884" y="580" width="1" height="1" fill="#5a9272"/><rect x="885" y="580" width="1" height="1" fill="#5a9272"/><rect x="884" y="579" width="1" height="1" fill="#e4e4e4"/><rect x="885" y="579" width="1" height="1" fill="#5a9272"/><rect x="886" y="579" width="1" height="1" fill="#5a9272"/><rect x="885" y="578" width="1" height="1" fill="#e4e4e4"/><rect x="886" y="578" width="1" height="1" fill="#5a9272"/><rect x="887" y="578" width="1" height="1" fill="#5a9272"/><rect x="886" y="577" width="1" height="1" fill="#e4e4e4"/><rect x="887" y="577" width="1" height="1" fill="#5a9272"/><rect x="887" y="576" width="1" height="1" fill="#e4e4e4"/><rect x="882" y="586" width="1" height="1" fill="#e4e4e4"/><rect x="883" y="586" width="1" height="1" fill="#5a9272"/><rect x="884" y="586" width="1" height="1" fill="#5a9272"/><rect x="883" y="585" width="1" height="1" fill="#e4e4e4"/><rect x="884" y="585" width="1" height="1" fill="#5a9272"/><rect x="885" y="585" width="1" height="1" fill="#5a9272"/><rect x="884" y="584" width="1" height="1" fill="#e4e4e4"/><rect x="885" y="584" width="1" height="1" fill="#5a9272"/><rect x="886" y="584" width="1" height="1" fill="#5a9272"/><rect x="885" y="583" width="1" height="1" fill="#e4e4e4"/><rect x="886" y="583" width="1" height="1" fill="#5a9272"/><rect x="887" y="583" width="1" height="1" fill="#5a9272"/><rect x="886" y="582" width="1" height="1" fill="#e4e4e4"/><rect x="887" y="582" width="1" height="1" fill="#5a9272"/><rect x="887" y="581" width="1" height="1" fill="#e4e4e4"/><rect x="887" y="565" width="1" height="5" fill="#e4e4e4"/></svg></body></html>
